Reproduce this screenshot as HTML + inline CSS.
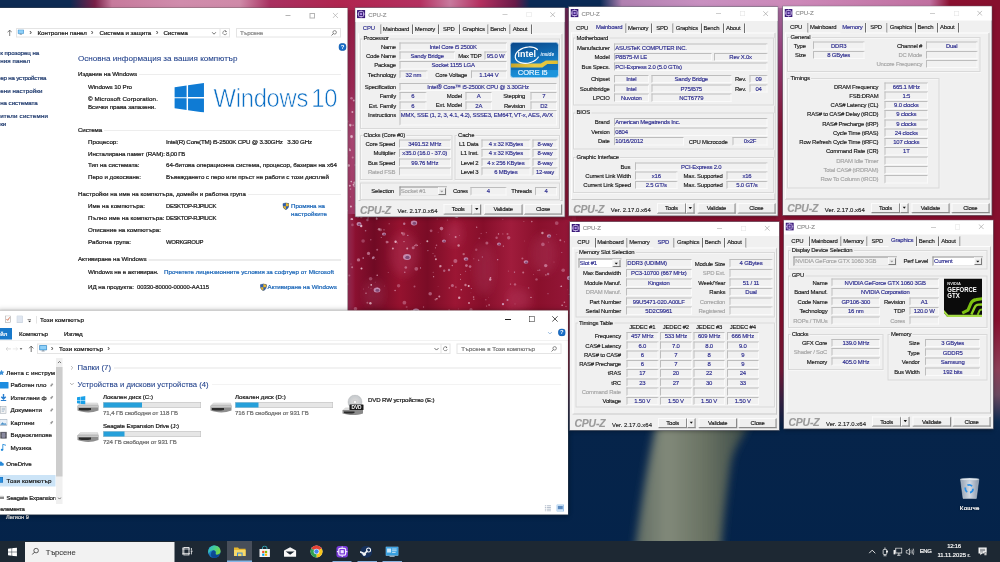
<!DOCTYPE html>
<html lang="bg"><head><meta charset="utf-8"><title>Desktop</title><style>
html,body{margin:0;padding:0;}
body{overflow:hidden;background:#04234a;font-family:"Liberation Sans",sans-serif;}
#r{position:relative;width:2000px;height:1124px;overflow:hidden;}
.b{position:absolute;display:block;}
.t{position:absolute;white-space:nowrap;line-height:1;-webkit-text-stroke:0.44px;}
.vb{border:2px solid #bdbdbd;border-right-color:#fafafa;border-bottom-color:#fafafa;box-sizing:border-box;background:#f1f1f1;}
.gb{border:2px solid #d9d9d9;box-sizing:border-box;box-shadow:1.2px 1.2px 0 #fcfcfc,inset 1.2px 1.2px 0 #fcfcfc;}
.bt{border:2px solid #fbfbfb;border-right-color:#8a8a8a;border-bottom-color:#8a8a8a;box-sizing:border-box;background:#efefef;box-shadow:1px 1px 0 #bdbdbd;}

html,body{width:1000px;height:562px;}
#o{position:absolute;left:0;top:0;width:2000px;height:1124px;transform:scale(0.5);transform-origin:0 0;overflow:hidden;}
</style></head><body><div id="o"><div id="r"><svg width="0" height="0" style="position:absolute"><defs><filter id="bl05" x="-5%" y="-5%" width="110%" height="110%"><feGaussianBlur stdDeviation="0.5"/></filter><filter id="bl3" x="-20%" y="-20%" width="140%" height="140%"><feGaussianBlur stdDeviation="4"/></filter></defs></svg>
<div class="b" style="left:0;top:0;width:2000px;height:1124px;background:linear-gradient(180deg,#8f0f2e 0px,#8a1030 640px,#7a1a3a 740px,#3a2448 800px,#06244a 856px,#04234a 1124px);"></div>
<div class="b" style="left:688px;top:16px;width:32px;height:424px;background:linear-gradient(180deg,#9a1c46 0,#a02a58 160px,#b04a78 260px,#a83a68 424px);"></div>
<div class="b" style="left:688px;top:428px;width:464px;height:200px;background:linear-gradient(90deg,#b04070 0,#8a1030 5%,#700a24 13%,#95122f 24%,#7a0c26 36%,#9c1634 48%,#860e2a 60%,#a01c3c 72%,#8a102c 84%,#96183a 100%);"></div>
<svg class="b" style="left:688px;top:428px;" width="464.00" height="200.00" viewBox="0 0 232 100"><g filter="url(#bl05)"><ellipse cx="60" cy="40" rx="14" ry="22" fill="#c04870" opacity="0.28" filter="url(#bl3)"/><ellipse cx="140" cy="55" rx="10" ry="26" fill="#c04870" opacity="0.28" filter="url(#bl3)"/><ellipse cx="200" cy="40" rx="12" ry="20" fill="#c04870" opacity="0.28" filter="url(#bl3)"/><ellipse cx="30" cy="80" rx="10" ry="14" fill="#c04870" opacity="0.28" filter="url(#bl3)"/><ellipse cx="110" cy="20" rx="9" ry="12" fill="#c04870" opacity="0.28" filter="url(#bl3)"/><ellipse cx="175" cy="85" rx="12" ry="10" fill="#c04870" opacity="0.28" filter="url(#bl3)"/><circle cx="105.0" cy="56.0" r="1.2" fill="#d8b0d0" opacity="0.55"/><circle cx="198.4" cy="19.0" r="1.2" fill="#f8e4ec" opacity="0.56"/><circle cx="142.4" cy="18.6" r="0.7" fill="#e0a0bc" opacity="0.38"/><circle cx="125.0" cy="89.0" r="1" fill="#f4d0e0" opacity="0.63"/><circle cx="91.9" cy="45.3" r="1" fill="#f8e4ec" opacity="0.66"/><circle cx="144.6" cy="83.2" r="0.4" fill="#f4d0e0" opacity="0.32"/><circle cx="204.1" cy="60.0" r="1.2" fill="#d8b0d0" opacity="0.48"/><circle cx="137.1" cy="19.5" r="0.5" fill="#e0a0bc" opacity="0.57"/><circle cx="153.7" cy="45.7" r="0.6" fill="#d8b0d0" opacity="0.85"/><circle cx="231.0" cy="84.0" r="1" fill="#e0a0bc" opacity="0.47"/><circle cx="53.3" cy="28.9" r="0.4" fill="#f8e4ec" opacity="0.72"/><circle cx="92.9" cy="84.7" r="0.7" fill="#f4d0e0" opacity="0.83"/><circle cx="196.6" cy="0.1" r="0.5" fill="#f4d0e0" opacity="0.56"/><circle cx="227.4" cy="39.7" r="0.4" fill="#f8e4ec" opacity="0.65"/><circle cx="180.6" cy="27.0" r="0.4" fill="#e0a0bc" opacity="0.48"/><circle cx="223.7" cy="75.8" r="0.4" fill="#eab8cc" opacity="0.44"/><circle cx="23.4" cy="6.0" r="1.2" fill="#d8b0d0" opacity="0.40"/><circle cx="129.8" cy="44.7" r="0.5" fill="#eab8cc" opacity="0.53"/><circle cx="89.0" cy="39.5" r="0.5" fill="#f4d0e0" opacity="0.45"/><circle cx="225.3" cy="80.3" r="0.6" fill="#f4d0e0" opacity="0.42"/><circle cx="91.5" cy="85.4" r="1" fill="#f8e4ec" opacity="0.36"/><circle cx="229.5" cy="21.3" r="0.6" fill="#f4d0e0" opacity="0.72"/><circle cx="76.3" cy="29.6" r="0.4" fill="#f4d0e0" opacity="0.35"/><circle cx="135.2" cy="24.3" r="0.8" fill="#e0a0bc" opacity="0.50"/><circle cx="105.1" cy="95.9" r="0.7" fill="#f8e4ec" opacity="0.37"/><circle cx="89.6" cy="62.7" r="0.6" fill="#eab8cc" opacity="0.75"/><circle cx="57.9" cy="19.0" r="1" fill="#f8e4ec" opacity="0.41"/><circle cx="220.4" cy="88.2" r="0.8" fill="#f4d0e0" opacity="0.53"/><circle cx="24.1" cy="3.9" r="0.6" fill="#eab8cc" opacity="0.71"/><circle cx="90.9" cy="42.1" r="0.8" fill="#d8b0d0" opacity="0.46"/><circle cx="40.7" cy="72.0" r="0.4" fill="#eab8cc" opacity="0.43"/><circle cx="129.8" cy="85.2" r="0.8" fill="#f4d0e0" opacity="0.45"/><circle cx="212.8" cy="20.4" r="0.4" fill="#f4d0e0" opacity="0.45"/><circle cx="103.4" cy="6.0" r="0.5" fill="#e0a0bc" opacity="0.50"/><circle cx="132.7" cy="13.2" r="0.6" fill="#eab8cc" opacity="0.79"/><circle cx="227.5" cy="65.7" r="1" fill="#f8e4ec" opacity="0.62"/><circle cx="32.6" cy="3.5" r="0.4" fill="#d8b0d0" opacity="0.80"/><circle cx="162.6" cy="96.3" r="0.4" fill="#f8e4ec" opacity="0.65"/><circle cx="111.9" cy="73.0" r="0.6" fill="#eab8cc" opacity="0.85"/><circle cx="17.5" cy="54.6" r="1" fill="#f4d0e0" opacity="0.80"/><circle cx="171.0" cy="70.4" r="1.2" fill="#e0a0bc" opacity="0.49"/><circle cx="159.0" cy="90.1" r="1.2" fill="#d8b0d0" opacity="0.82"/><circle cx="7.0" cy="50.0" r="0.4" fill="#f8e4ec" opacity="0.66"/><circle cx="88.0" cy="1.2" r="0.4" fill="#f4d0e0" opacity="0.35"/><circle cx="26.8" cy="25.7" r="0.7" fill="#e0a0bc" opacity="0.51"/><circle cx="170.5" cy="58.1" r="0.7" fill="#d8b0d0" opacity="0.76"/><circle cx="19.4" cy="75.0" r="0.4" fill="#e0a0bc" opacity="0.63"/><circle cx="111.6" cy="23.0" r="1" fill="#f4d0e0" opacity="0.57"/><circle cx="142.6" cy="92.0" r="0.6" fill="#f4d0e0" opacity="0.50"/><circle cx="33.2" cy="61.2" r="0.8" fill="#eab8cc" opacity="0.71"/><circle cx="79.5" cy="93.0" r="0.7" fill="#eab8cc" opacity="0.48"/><circle cx="154.5" cy="19.9" r="0.7" fill="#eab8cc" opacity="0.78"/><circle cx="89.2" cy="58.3" r="0.6" fill="#eab8cc" opacity="0.37"/><circle cx="115.2" cy="83.7" r="1.2" fill="#f4d0e0" opacity="0.69"/><circle cx="220.4" cy="27.7" r="0.5" fill="#f4d0e0" opacity="0.55"/><circle cx="63.8" cy="21.4" r="0.7" fill="#d8b0d0" opacity="0.64"/><circle cx="114.6" cy="31.5" r="1.2" fill="#f8e4ec" opacity="0.55"/><circle cx="17.3" cy="3.1" r="1.2" fill="#f8e4ec" opacity="0.32"/><circle cx="164.4" cy="57.1" r="0.6" fill="#f8e4ec" opacity="0.31"/><circle cx="31.5" cy="45.5" r="0.4" fill="#e0a0bc" opacity="0.43"/><circle cx="32.7" cy="4.7" r="1" fill="#f4d0e0" opacity="0.55"/><circle cx="146.2" cy="65.5" r="1.2" fill="#e0a0bc" opacity="0.83"/><circle cx="158.8" cy="19.9" r="0.7" fill="#e0a0bc" opacity="0.40"/><circle cx="2.5" cy="47.2" r="1" fill="#f4d0e0" opacity="0.40"/><circle cx="63.2" cy="34.6" r="1" fill="#f8e4ec" opacity="0.58"/><circle cx="231.3" cy="15.9" r="1.2" fill="#eab8cc" opacity="0.35"/><circle cx="216.4" cy="72.2" r="0.5" fill="#d8b0d0" opacity="0.55"/><circle cx="145.1" cy="91.0" r="0.7" fill="#f8e4ec" opacity="0.61"/><circle cx="204.0" cy="79.7" r="0.6" fill="#d8b0d0" opacity="0.48"/><circle cx="227.9" cy="9.9" r="1.2" fill="#f4d0e0" opacity="0.42"/><circle cx="208.8" cy="98.0" r="0.6" fill="#f8e4ec" opacity="0.84"/><circle cx="216.3" cy="26.2" r="1" fill="#f4d0e0" opacity="0.49"/><circle cx="19.2" cy="44.1" r="0.8" fill="#d8b0d0" opacity="0.72"/><circle cx="113.1" cy="2.8" r="1.2" fill="#f4d0e0" opacity="0.54"/><circle cx="8.1" cy="53.3" r="1" fill="#eab8cc" opacity="0.56"/><circle cx="232.0" cy="90.1" r="0.8" fill="#d8b0d0" opacity="0.82"/><circle cx="114.3" cy="94.9" r="0.4" fill="#eab8cc" opacity="0.54"/><circle cx="129.6" cy="83.1" r="0.8" fill="#eab8cc" opacity="0.59"/><circle cx="195.7" cy="56.0" r="0.6" fill="#d8b0d0" opacity="0.83"/><circle cx="201.9" cy="60.9" r="0.6" fill="#eab8cc" opacity="0.83"/><circle cx="121.6" cy="57.3" r="0.5" fill="#d8b0d0" opacity="0.59"/><circle cx="116.7" cy="60.5" r="0.4" fill="#f8e4ec" opacity="0.83"/><circle cx="119.7" cy="40.1" r="1.2" fill="#f8e4ec" opacity="0.37"/><circle cx="21.6" cy="16.7" r="0.8" fill="#d8b0d0" opacity="0.53"/><circle cx="222.0" cy="92.3" r="0.6" fill="#eab8cc" opacity="0.56"/><circle cx="29.5" cy="43.4" r="1.2" fill="#d8b0d0" opacity="0.59"/><circle cx="25.2" cy="42.0" r="0.4" fill="#e0a0bc" opacity="0.37"/><circle cx="180.8" cy="2.3" r="0.5" fill="#eab8cc" opacity="0.42"/><circle cx="159.4" cy="32.2" r="0.6" fill="#eab8cc" opacity="0.64"/><circle cx="24.3" cy="73.1" r="0.4" fill="#f8e4ec" opacity="0.64"/><circle cx="166.5" cy="70.1" r="0.7" fill="#f4d0e0" opacity="0.51"/><circle cx="95.9" cy="52.9" r="0.5" fill="#f8e4ec" opacity="0.41"/><circle cx="146.5" cy="63.8" r="0.8" fill="#eab8cc" opacity="0.77"/><circle cx="141.9" cy="85.7" r="0.5" fill="#e0a0bc" opacity="0.80"/><circle cx="73.3" cy="31.5" r="0.5" fill="#eab8cc" opacity="0.73"/><circle cx="45.1" cy="9.7" r="0.5" fill="#eab8cc" opacity="0.70"/><circle cx="60.2" cy="9.7" r="1.2" fill="#d8b0d0" opacity="0.60"/><circle cx="163.5" cy="20.1" r="1" fill="#f4d0e0" opacity="0.35"/><circle cx="132.2" cy="35.8" r="1.2" fill="#e0a0bc" opacity="0.36"/><circle cx="117.3" cy="75.8" r="0.8" fill="#eab8cc" opacity="0.74"/><circle cx="111.8" cy="2.4" r="1.2" fill="#f8e4ec" opacity="0.64"/><circle cx="210.0" cy="48.1" r="0.5" fill="#eab8cc" opacity="0.36"/><circle cx="40.0" cy="15.8" r="0.6" fill="#f4d0e0" opacity="0.62"/><circle cx="31.2" cy="68.1" r="0.4" fill="#f4d0e0" opacity="0.48"/><circle cx="108.3" cy="51.5" r="0.7" fill="#eab8cc" opacity="0.63"/><circle cx="3.1" cy="70.1" r="1.2" fill="#eab8cc" opacity="0.40"/><circle cx="105.3" cy="73.9" r="0.7" fill="#eab8cc" opacity="0.63"/><circle cx="22.0" cy="79.2" r="0.6" fill="#f4d0e0" opacity="0.74"/><circle cx="163.5" cy="86.1" r="1" fill="#d8b0d0" opacity="0.61"/><circle cx="44.3" cy="58.5" r="0.6" fill="#e0a0bc" opacity="0.45"/><circle cx="27.0" cy="74.3" r="0.5" fill="#d8b0d0" opacity="0.37"/><circle cx="76.5" cy="53.9" r="0.6" fill="#d8b0d0" opacity="0.72"/><circle cx="94.1" cy="72.3" r="0.4" fill="#e0a0bc" opacity="0.47"/><circle cx="23.4" cy="88.8" r="1" fill="#f8e4ec" opacity="0.33"/><circle cx="63.3" cy="96.1" r="0.6" fill="#e0a0bc" opacity="0.42"/><circle cx="94.2" cy="18.2" r="0.4" fill="#d8b0d0" opacity="0.58"/><circle cx="115.4" cy="21.3" r="0.4" fill="#d8b0d0" opacity="0.84"/><circle cx="5.3" cy="61.5" r="1" fill="#eab8cc" opacity="0.44"/><circle cx="93.2" cy="5.0" r="0.5" fill="#d8b0d0" opacity="0.31"/><circle cx="60.0" cy="27.6" r="0.6" fill="#f8e4ec" opacity="0.60"/><circle cx="96.4" cy="52.1" r="1.2" fill="#f4d0e0" opacity="0.65"/><circle cx="187.8" cy="7.6" r="0.8" fill="#f4d0e0" opacity="0.51"/><circle cx="217.8" cy="38.6" r="0.5" fill="#d8b0d0" opacity="0.60"/><circle cx="138.4" cy="43.0" r="0.7" fill="#d8b0d0" opacity="0.46"/><circle cx="92.5" cy="31.2" r="0.8" fill="#e0a0bc" opacity="0.57"/><circle cx="62.6" cy="92.9" r="1" fill="#e0a0bc" opacity="0.31"/><circle cx="179.2" cy="58.6" r="1" fill="#eab8cc" opacity="0.52"/><circle cx="158.8" cy="5.3" r="0.6" fill="#d8b0d0" opacity="0.33"/><circle cx="229.4" cy="94.4" r="0.4" fill="#eab8cc" opacity="0.54"/><circle cx="110.8" cy="97.3" r="0.5" fill="#f4d0e0" opacity="0.59"/><circle cx="217.4" cy="72.3" r="0.7" fill="#eab8cc" opacity="0.84"/><circle cx="189.5" cy="60.4" r="0.4" fill="#f4d0e0" opacity="0.64"/><circle cx="105.7" cy="20.4" r="0.4" fill="#e0a0bc" opacity="0.59"/><circle cx="28.8" cy="44.3" r="1" fill="#d8b0d0" opacity="0.55"/><circle cx="60.8" cy="58.2" r="0.7" fill="#e0a0bc" opacity="0.73"/><circle cx="123.1" cy="99.8" r="0.6" fill="#eab8cc" opacity="0.43"/><circle cx="26.4" cy="89.3" r="1.2" fill="#f8e4ec" opacity="0.64"/><circle cx="83.3" cy="27.2" r="1" fill="#f8e4ec" opacity="0.68"/><circle cx="44.1" cy="27.9" r="0.5" fill="#eab8cc" opacity="0.82"/><circle cx="116.5" cy="65.3" r="0.5" fill="#f4d0e0" opacity="0.65"/><circle cx="2.2" cy="26.0" r="0.4" fill="#f8e4ec" opacity="0.32"/><circle cx="51.6" cy="27.8" r="1.2" fill="#f4d0e0" opacity="0.80"/><circle cx="37.3" cy="23.5" r="0.6" fill="#d8b0d0" opacity="0.56"/><circle cx="48.9" cy="34.4" r="1" fill="#eab8cc" opacity="0.76"/><circle cx="17.2" cy="12.0" r="1.2" fill="#f8e4ec" opacity="0.76"/><circle cx="178.4" cy="44.4" r="1" fill="#e0a0bc" opacity="0.51"/><circle cx="35.0" cy="15.3" r="1.2" fill="#f8e4ec" opacity="0.48"/><circle cx="127.3" cy="74.6" r="0.5" fill="#d8b0d0" opacity="0.66"/><circle cx="134.7" cy="46.2" r="0.6" fill="#f4d0e0" opacity="0.60"/><circle cx="100.2" cy="56.8" r="1.2" fill="#d8b0d0" opacity="0.46"/><circle cx="179.9" cy="7.6" r="0.5" fill="#f8e4ec" opacity="0.34"/><circle cx="70.5" cy="72.5" r="1" fill="#e0a0bc" opacity="0.46"/><circle cx="33.2" cy="35.8" r="1" fill="#e0a0bc" opacity="0.50"/><circle cx="27.2" cy="70.9" r="0.8" fill="#f8e4ec" opacity="0.81"/><circle cx="218.1" cy="91.3" r="0.7" fill="#f8e4ec" opacity="0.74"/><circle cx="70.7" cy="31.8" r="0.7" fill="#f8e4ec" opacity="0.44"/><circle cx="83.9" cy="36.6" r="0.6" fill="#d8b0d0" opacity="0.62"/><circle cx="184.7" cy="73.9" r="0.6" fill="#d8b0d0" opacity="0.60"/><circle cx="194.0" cy="56.3" r="0.5" fill="#f4d0e0" opacity="0.72"/><circle cx="204.4" cy="28.1" r="0.4" fill="#eab8cc" opacity="0.58"/><circle cx="126.2" cy="56.7" r="0.4" fill="#d8b0d0" opacity="0.34"/><circle cx="126.9" cy="78.8" r="0.4" fill="#e0a0bc" opacity="0.34"/><circle cx="171.0" cy="89.9" r="0.4" fill="#f4d0e0" opacity="0.65"/><circle cx="33.4" cy="74.6" r="1" fill="#d8b0d0" opacity="0.43"/><circle cx="51.1" cy="76.5" r="0.8" fill="#e0a0bc" opacity="0.72"/><circle cx="91.5" cy="33.8" r="0.6" fill="#eab8cc" opacity="0.57"/><circle cx="124.7" cy="72.1" r="1" fill="#f8e4ec" opacity="0.80"/><circle cx="95.3" cy="82.6" r="1" fill="#e0a0bc" opacity="0.77"/><circle cx="187.0" cy="83.4" r="0.7" fill="#f8e4ec" opacity="0.65"/><circle cx="121.5" cy="71.0" r="1.2" fill="#f4d0e0" opacity="0.53"/><circle cx="97.5" cy="14.6" r="1.8" fill="#e0a8c4" opacity="0.60"/><circle cx="87.1" cy="16.8" r="1.4" fill="#e0a8c4" opacity="0.43"/><circle cx="67.7" cy="97.0" r="1.2" fill="#e0a8c4" opacity="0.39"/><circle cx="26.6" cy="64.8" r="1.8" fill="#e0a8c4" opacity="0.35"/><circle cx="14.5" cy="45.9" r="1.7" fill="#e0a8c4" opacity="0.57"/><circle cx="8.4" cy="10.9" r="1.3" fill="#e0a8c4" opacity="0.37"/><circle cx="54.6" cy="71.7" r="1.7" fill="#e0a8c4" opacity="0.37"/><circle cx="42.9" cy="28.1" r="1.3" fill="#e0a8c4" opacity="0.53"/><circle cx="72.3" cy="54.8" r="1.9" fill="#e0a8c4" opacity="0.44"/><circle cx="60.4" cy="88.7" r="1.9" fill="#e0a8c4" opacity="0.40"/><circle cx="127.0" cy="95.7" r="1.6" fill="#e0a8c4" opacity="0.37"/><circle cx="11.5" cy="94.8" r="1.8" fill="#e0a8c4" opacity="0.42"/><circle cx="122.4" cy="51.6" r="1.4" fill="#e0a8c4" opacity="0.60"/><circle cx="152.6" cy="23.8" r="1.2" fill="#e0a8c4" opacity="0.44"/><circle cx="86.2" cy="79.7" r="1.8" fill="#e0a8c4" opacity="0.48"/><circle cx="36.5" cy="15.7" r="1.5" fill="#e0a8c4" opacity="0.38"/><circle cx="201.7" cy="51.6" r="1.7" fill="#e0a8c4" opacity="0.60"/><circle cx="61.8" cy="53.5" r="1.3" fill="#e0a8c4" opacity="0.53"/><circle cx="0.3" cy="82.1" r="1.9" fill="#e0a8c4" opacity="0.55"/><circle cx="19.1" cy="27.0" r="1.8" fill="#e0a8c4" opacity="0.33"/><circle cx="111.4" cy="46.9" r="2.0" fill="#e0a8c4" opacity="0.48"/><circle cx="198.9" cy="30.4" r="1.8" fill="#e0a8c4" opacity="0.43"/><circle cx="212.7" cy="9.1" r="1.9" fill="#e0a8c4" opacity="0.36"/><circle cx="126.1" cy="52.6" r="1.3" fill="#e0a8c4" opacity="0.55"/><circle cx="72.2" cy="31.1" r="1.3" fill="#e0a8c4" opacity="0.39"/><circle cx="108.4" cy="71.5" r="1.5" fill="#e0a8c4" opacity="0.51"/><circle cx="24.5" cy="39.4" r="1.6" fill="#e0a8c4" opacity="0.59"/><circle cx="192.5" cy="65.4" r="1.2" fill="#e0a8c4" opacity="0.41"/><circle cx="164.7" cy="23.7" r="1.7" fill="#e0a8c4" opacity="0.44"/><circle cx="2.4" cy="99.2" r="1.8" fill="#e0a8c4" opacity="0.36"/><circle cx="142.9" cy="29.0" r="1.5" fill="#e0a8c4" opacity="0.46"/><circle cx="69.2" cy="33.7" r="1.5" fill="#e0a8c4" opacity="0.50"/><circle cx="59.5" cy="20.0" r="1.8" fill="#e0a8c4" opacity="0.40"/><circle cx="219.2" cy="56.3" r="1.8" fill="#e0a8c4" opacity="0.40"/><ellipse cx="70" cy="9" rx="3.2" ry="2.4" fill="#d0a4c8" opacity="0.8"/><ellipse cx="70.4" cy="9.4" rx="1.8" ry="1.3" fill="#5a2858" opacity="0.65"/><ellipse cx="33" cy="76" rx="3.4" ry="2.5" fill="#d0a4c8" opacity="0.8"/><ellipse cx="33.4" cy="76.4" rx="1.9" ry="1.4" fill="#5a2858" opacity="0.65"/><ellipse cx="63" cy="43" rx="4" ry="3.0" fill="#d0a4c8" opacity="0.8"/><ellipse cx="63.4" cy="43.4" rx="2.2" ry="1.6" fill="#5a2858" opacity="0.65"/><ellipse cx="122" cy="45" rx="2.4" ry="1.8" fill="#d0a4c8" opacity="0.8"/><ellipse cx="122.4" cy="45.4" rx="1.3" ry="1.0" fill="#5a2858" opacity="0.65"/><ellipse cx="182" cy="48" rx="2.4" ry="1.8" fill="#d0a4c8" opacity="0.8"/><ellipse cx="182.4" cy="48.4" rx="1.3" ry="1.0" fill="#5a2858" opacity="0.65"/><ellipse cx="226" cy="64" rx="3" ry="2.2" fill="#d0a4c8" opacity="0.8"/><ellipse cx="226.4" cy="64.4" rx="1.7" ry="1.2" fill="#5a2858" opacity="0.65"/><ellipse cx="72" cy="97" rx="3.4" ry="2.5" fill="#d0a4c8" opacity="0.8"/><ellipse cx="72.4" cy="97.4" rx="1.9" ry="1.4" fill="#5a2858" opacity="0.65"/><ellipse cx="100" cy="27" rx="2" ry="1.5" fill="#d0a4c8" opacity="0.8"/><ellipse cx="100.4" cy="27.4" rx="1.1" ry="0.8" fill="#5a2858" opacity="0.65"/><ellipse cx="155" cy="30" rx="2" ry="1.5" fill="#d0a4c8" opacity="0.8"/><ellipse cx="155.4" cy="30.4" rx="1.1" ry="0.8" fill="#5a2858" opacity="0.65"/><ellipse cx="40" cy="20" rx="2" ry="1.5" fill="#d0a4c8" opacity="0.8"/><ellipse cx="40.4" cy="20.4" rx="1.1" ry="0.8" fill="#5a2858" opacity="0.65"/><ellipse cx="205" cy="22" rx="2.2" ry="1.7" fill="#d0a4c8" opacity="0.8"/><ellipse cx="205.4" cy="22.4" rx="1.2" ry="0.9" fill="#5a2858" opacity="0.65"/><ellipse cx="15" cy="10" rx="2.5" ry="1.9" fill="#d0a4c8" opacity="0.8"/><ellipse cx="15.4" cy="10.4" rx="1.4" ry="1.0" fill="#5a2858" opacity="0.65"/></g></svg>
<svg class="b" style="left:688px;top:16px;" width="32.00" height="424.00" viewBox="0 0 16 212"><circle cx="13.2" cy="83.1" r="0.8" fill="#f4d0e0" opacity="0.71"/><circle cx="2.1" cy="159.5" r="0.8" fill="#f4d0e0" opacity="0.49"/><circle cx="6.4" cy="188.8" r="0.6" fill="#f4d0e0" opacity="0.45"/><circle cx="0.5" cy="210.2" r="1.3" fill="#f4d0e0" opacity="0.60"/><circle cx="1.2" cy="200.7" r="1.3" fill="#f4d0e0" opacity="0.86"/><circle cx="2.2" cy="99.2" r="0.8" fill="#f4d0e0" opacity="0.81"/><circle cx="6.2" cy="117.1" r="1.3" fill="#f4d0e0" opacity="0.71"/><circle cx="11.6" cy="157.1" r="1" fill="#f4d0e0" opacity="0.89"/><circle cx="12.6" cy="163.8" r="0.6" fill="#f4d0e0" opacity="0.53"/><circle cx="3.0" cy="113.6" r="1.3" fill="#f4d0e0" opacity="0.45"/><circle cx="6.0" cy="142.3" r="1" fill="#f4d0e0" opacity="0.81"/><circle cx="9.8" cy="92.5" r="1" fill="#f4d0e0" opacity="0.67"/><circle cx="5.6" cy="141.1" r="0.8" fill="#f4d0e0" opacity="0.69"/><circle cx="3.2" cy="202.6" r="0.8" fill="#f4d0e0" opacity="0.68"/><circle cx="0.4" cy="163.6" r="0.6" fill="#f4d0e0" opacity="0.47"/><circle cx="7.6" cy="129.3" r="1" fill="#f4d0e0" opacity="0.56"/><circle cx="14.9" cy="121.3" r="1.3" fill="#f4d0e0" opacity="0.84"/><circle cx="7.2" cy="173.6" r="0.8" fill="#f4d0e0" opacity="0.85"/><circle cx="8.7" cy="149.6" r="1" fill="#f4d0e0" opacity="0.48"/><circle cx="11.9" cy="197.4" r="1" fill="#f4d0e0" opacity="0.70"/><circle cx="2.0" cy="187.1" r="1" fill="#f4d0e0" opacity="0.74"/><circle cx="5.8" cy="177.7" r="1" fill="#f4d0e0" opacity="0.82"/><circle cx="3.0" cy="147.8" r="0.6" fill="#f4d0e0" opacity="0.63"/><circle cx="6.5" cy="181.1" r="0.8" fill="#f4d0e0" opacity="0.55"/><circle cx="10.7" cy="174.8" r="1.3" fill="#f4d0e0" opacity="0.71"/><circle cx="10.2" cy="178.4" r="0.8" fill="#f4d0e0" opacity="0.50"/><circle cx="7.5" cy="90.3" r="1.3" fill="#f4d0e0" opacity="0.46"/><circle cx="6.5" cy="117.7" r="0.8" fill="#f4d0e0" opacity="0.53"/><circle cx="9.1" cy="117.2" r="0.6" fill="#f4d0e0" opacity="0.76"/><circle cx="12.6" cy="127.3" r="1.3" fill="#f4d0e0" opacity="0.70"/><circle cx="7.5" cy="128.4" r="1.3" fill="#f4d0e0" opacity="0.78"/><circle cx="7.8" cy="211.2" r="1.3" fill="#f4d0e0" opacity="0.81"/><circle cx="1.9" cy="86.3" r="1" fill="#f4d0e0" opacity="0.66"/><circle cx="6.9" cy="198.4" r="1" fill="#f4d0e0" opacity="0.85"/><circle cx="4.7" cy="157.5" r="1.3" fill="#f4d0e0" opacity="0.77"/><circle cx="9.6" cy="176.8" r="1" fill="#f4d0e0" opacity="0.84"/><circle cx="14.0" cy="104.7" r="1.3" fill="#f4d0e0" opacity="0.52"/><circle cx="14.0" cy="208.1" r="1.3" fill="#f4d0e0" opacity="0.75"/><circle cx="8.4" cy="104.0" r="1" fill="#f4d0e0" opacity="0.73"/><circle cx="15.0" cy="194.9" r="1" fill="#f4d0e0" opacity="0.83"/></svg>
<div class="b" style="left:0px;top:0px;width:2000px;height:20px;background:linear-gradient(90deg,#0d2a52 0,#0d2a52 140px,#7a2048 190px,#c77a9c 224px,#d08cac 360px,#cf8aa8 480px,#a83060 540px,#b0254f 680px,#b43060 840px,#c87a9e 900px,#b43060 960px,#6a1a48 1030px,#0a2a55 1060px,#0a2a55 1200px,#b080b0 1244px,#c890c0 1400px,#cc88b8 1600px,#c070a0 1860px,#8a1030 1900px,#86102e 2000px);"></div>
<div class="b" style="left:1124px;top:16px;width:20px;height:424px;background:linear-gradient(180deg,#6a2858 0,#8a2050 80px,#8c1838 240px,#8a1434 424px);"></div>
<div class="b" style="left:1552px;top:16px;width:18px;height:424px;background:linear-gradient(180deg,#b070a8 0,#a04080 100px,#8c1838 240px,#8a1434 424px);"></div>
<div class="b" style="left:1976px;top:0px;width:24px;height:1124px;background:linear-gradient(180deg,#86102e 0,#86102e 640px,#8c4058 740px,#6a4a60 790px,#0a2a50 844px,rgba(6,36,74,0) 864px);"></div>
<svg class="b" style="left:1120px;top:840px;" width="520.00" height="260.00" viewBox="0 0 260 130"><defs><linearGradient id="stg" x1="0" x2="1" y1="0" y2="0"><stop offset="0" stop-color="#5e6a62"/><stop offset="0.28" stop-color="#828a7a"/><stop offset="0.62" stop-color="#687162"/><stop offset="1" stop-color="#384846"/></linearGradient></defs><path d="M97 0 L190 0 C186 14 174 26 171 42 C167 70 163 100 161 130 L75 130 C80 90 88 40 97 0 Z" fill="url(#stg)" filter="url(#bl3)"/></svg>
<div class="t" style="left:12px;top:1028.46px;font-size:11.2px;color:#e8e8e8;">Легион 9</div>
<svg class="b" style="left:1919.2px;top:955.2px;" width="40.80" height="44.00" viewBox="0 0 40 43"><defs><linearGradient id="rg" x1="0" y1="0" x2="1" y2="0"><stop offset="0" stop-color="#9aa8b8"/><stop offset="0.5" stop-color="#dfe5ec"/><stop offset="1" stop-color="#8e9cae"/></linearGradient></defs><path d="M2 3 H38 L33 41 H7 Z" fill="url(#rg)" stroke="#d8e0e8" stroke-width="1" opacity="0.95"/><ellipse cx="20" cy="3.6" rx="18" ry="2.6" fill="#dfe6ee" stroke="#9aa8b8" stroke-width="0.8"/><circle cx="19" cy="22" r="7.6" fill="none" stroke="#2a90e8" stroke-width="3.4" stroke-dasharray="10 5.6"/></svg>
<div class="t" style="left:1939.6px;top:1008.82px;font-size:12.4px;color:#fff;letter-spacing:0.516px;transform:translateX(-50%);text-shadow:0 1px 3px #000;">Кошче</div>
<div class="b" style="left:-4px;top:16px;width:699px;height:608px;background:#fff;box-shadow:0 0 0 1.2px rgba(90,90,90,.55),0 6px 12px rgba(0,0,0,.35);"></div>
<div class="b" style="left:570.6px;top:30.4px;width:10.8px;height:2px;background:#b4b4b4;"></div>
<div class="b" style="left:618.6px;top:25.6px;width:11.2px;height:11.2px;border:2px solid #b4b4b4;box-sizing:border-box;"></div>
<svg class="b" style="left:665.2px;top:25.2px;" width="11.60" height="11.60" viewBox="0 0 10 10"><path d="M0.5 0.5 L9.5 9.5 M9.5 0.5 L0.5 9.5" stroke="#a0a0a0" stroke-width="1"/></svg>
<svg class="b" style="left:13.6px;top:58.8px;" width="10.80" height="13.60" viewBox="0 0 8 10"><path d="M4 9.6 V1 M0.8 4.2 L4 0.9 L7.2 4.2" fill="none" stroke="#555" stroke-width="1.1"/></svg>
<div class="b" style="left:32px;top:56px;width:428px;height:19.2px;border:2px solid #e4e4e4;box-sizing:border-box;background:#fff;"></div>
<svg class="b" style="left:35.2px;top:59.2px;" width="13.20" height="11.22" viewBox="0 0 16 13.6"><rect x="1" y="0.5" width="14" height="9.5" rx="0.6" fill="#3fa0e0" stroke="#2070b0" stroke-width="0.8"/><rect x="2.2" y="1.7" width="11.6" height="7" fill="#8fd0f8"/><rect x="5" y="11" width="6" height="1.6" fill="#8a99a8"/><rect x="7" y="10" width="2" height="1.4" fill="#6a7a8a"/></svg>
<div class="t" style="left:59.2px;top:58.38px;font-size:14px;color:#555;">›</div>
<div class="t" style="left:75px;top:59.22px;font-size:12.4px;color:#1a1a1a;letter-spacing:0.016px;">Контролен панел</div>
<div class="t" style="left:182px;top:58.38px;font-size:14px;color:#555;">›</div>
<div class="t" style="left:199px;top:59.22px;font-size:12.4px;color:#1a1a1a;letter-spacing:-0.15px;">Система и защита</div>
<div class="t" style="left:312px;top:58.38px;font-size:14px;color:#555;">›</div>
<div class="t" style="left:327px;top:59.22px;font-size:12.4px;color:#1a1a1a;letter-spacing:-0.206px;">Система</div>
<svg class="b" style="left:422.6px;top:62.8px;" width="10.00" height="6.80" viewBox="0 0 10 6"><path d="M1 1 L5 5 L9 1" fill="none" stroke="#444" stroke-width="1.5"/></svg>
<div class="b" style="left:438.8px;top:57px;width:2px;height:17.2px;background:#e4e4e4;"></div>
<svg class="b" style="left:443.6px;top:59.6px;" width="11.20" height="11.60" viewBox="0 0 12 12"><path d="M9.6 3.2 A4.3 4.3 0 1 0 10.3 6.6" fill="none" stroke="#555" stroke-width="1.3"/><path d="M7.3 0.6 L10.4 3 L7.3 4.4 Z" fill="#555"/></svg>
<div class="b" style="left:472px;top:56px;width:210px;height:19.2px;border:2px solid #e4e4e4;box-sizing:border-box;background:#fff;"></div>
<div class="t" style="left:480px;top:59.22px;font-size:12.4px;color:#8a8a8a;letter-spacing:-0.436px;">Търсене</div>
<svg class="b" style="left:662px;top:59.6px;" width="12.00" height="12.00" viewBox="0 0 12 12"><circle cx="7.3" cy="4.7" r="3.5" fill="none" stroke="#555" stroke-width="1.3"/><path d="M4.8 7.2 L1 11" stroke="#555" stroke-width="1.5"/></svg>
<div class="t" style="left:0.4px;top:99.42px;font-size:12.4px;color:#1f3a6e;letter-spacing:-0.136px;">к прозорец на</div>
<div class="t" style="left:0.4px;top:115.42px;font-size:12.4px;color:#1f3a6e;letter-spacing:0.21px;">ния панел</div>
<div class="t" style="left:0.4px;top:150.42px;font-size:12.4px;color:#1f3a6e;letter-spacing:-0.394px;">ер на устройства</div>
<div class="t" style="left:0.4px;top:175.42px;font-size:12.4px;color:#1f3a6e;letter-spacing:0.168px;">ени настройки</div>
<div class="t" style="left:0.4px;top:199.92px;font-size:12.4px;color:#1f3a6e;letter-spacing:-0.128px;">на системата</div>
<div class="t" style="left:0.4px;top:225.42px;font-size:12.4px;color:#1f3a6e;letter-spacing:0.384px;">ители системни</div>
<div class="t" style="left:0.4px;top:241.42px;font-size:12.4px;color:#1f3a6e;letter-spacing:-0.176px;">ки</div>
<svg class="b" style="left:676.8px;top:86px;" width="16.00" height="16.00" viewBox="0 0 16 16"><circle cx="8" cy="8" r="7.6" fill="#1a6fc8"/><circle cx="8" cy="8" r="7.6" fill="none" stroke="#0f4f98" stroke-width="0.8"/><text x="8" y="12.3" font-size="12" font-weight="bold" text-anchor="middle" fill="#fff" font-family="Liberation Sans, sans-serif">?</text></svg>
<div class="t" style="left:156px;top:107.42px;font-size:16.2px;color:#1f3f8a;letter-spacing:-0px;-webkit-text-stroke:0.16px;">Основна информация за вашия компютър</div>
<div class="t" style="left:156px;top:141.82px;font-size:12.4px;color:#1a1a1a;letter-spacing:-0.114px;">Издание на Windows</div>
<div class="b" style="left:278px;top:148.8px;width:404px;height:1.6px;background:#dadada;"></div>
<div class="t" style="left:176px;top:167.42px;font-size:12.4px;color:#1a1a1a;letter-spacing:-0.162px;">Windows 10 Pro</div>
<div class="t" style="left:176px;top:191.42px;font-size:12.4px;color:#1a1a1a;letter-spacing:0.228px;">© Microsoft Corporation.</div>
<div class="t" style="left:176px;top:207.42px;font-size:12.4px;color:#1a1a1a;letter-spacing:-0.03px;">Всички права запазени.</div>
<svg class="b" style="left:348px;top:166px;" width="61.60" height="59.20" viewBox="0 0 88 88"><path d="M0 12.4 L35.7 7.6 V42.1 H0 Z M40 6.9 L87.3 0 V41.8 H40 Z M0 45.7 H35.7 V80.3 L0 75.3 Z M40 46.2 H87.3 V88 L40 81.3 Z" fill="#0f7bd4"/></svg>
<div class="t" style="left:426.8px;top:168.6px;font-size:52px;color:#0a6ec4;transform-origin:0 0;transform:scaleX(0.9148);letter-spacing:-0.6px;word-spacing:-7px;-webkit-text-stroke:1.3px #fff;">Windows 10</div>
<div class="t" style="left:156px;top:252.62px;font-size:12.4px;color:#1a1a1a;letter-spacing:-0.276px;">Система</div>
<div class="b" style="left:208px;top:259.6px;width:474px;height:1.6px;background:#dadada;"></div>
<div class="t" style="left:176px;top:278.42px;font-size:12.4px;color:#1a1a1a;letter-spacing:-0.016px;">Процесор:</div>
<div class="t" style="left:332px;top:278.42px;font-size:12.4px;color:#1a1a1a;letter-spacing:-0.372px;white-space:pre;">Intel(R) Core(TM) i5-2500K CPU @ 3.30GHz   3.30 GHz</div>
<div class="t" style="left:176px;top:300.92px;font-size:12.4px;color:#1a1a1a;letter-spacing:-0.106px;">Инсталирана памет (RAM):</div>
<div class="t" style="left:332px;top:300.92px;font-size:12.4px;color:#1a1a1a;letter-spacing:-0.632px;white-space:pre;">8,00 ГБ</div>
<div class="t" style="left:176px;top:324.42px;font-size:12.4px;color:#1a1a1a;letter-spacing:-0.064px;">Тип на системата:</div>
<div class="t" style="left:332px;top:324.42px;font-size:12.4px;color:#1a1a1a;letter-spacing:-0.024px;white-space:pre;">64-битова операционна система, процесор, базиран на x64</div>
<div class="t" style="left:176px;top:346.92px;font-size:12.4px;color:#1a1a1a;letter-spacing:-0.044px;">Перо и докосване:</div>
<div class="t" style="left:332px;top:346.92px;font-size:12.4px;color:#1a1a1a;letter-spacing:-0.066px;white-space:pre;">Въвеждането с перо или пръст не работи с този дисплей</div>
<div class="t" style="left:156px;top:380.92px;font-size:12.4px;color:#1a1a1a;letter-spacing:0.04px;">Настройки на име на компютъра, домейн и работна група</div>
<div class="b" style="left:496px;top:387.9px;width:186px;height:1.6px;background:#dadada;"></div>
<div class="t" style="left:176px;top:406.42px;font-size:12.4px;color:#1a1a1a;letter-spacing:0.096px;">Име на компютъра:</div>
<div class="t" style="left:332px;top:406.74px;font-size:11.8px;color:#1a1a1a;letter-spacing:-0.706px;">DESKTOP-RJPIUCK</div>
<div class="t" style="left:176px;top:429.92px;font-size:12.4px;color:#1a1a1a;letter-spacing:0.068px;">Пълно име на компютъра:</div>
<div class="t" style="left:332px;top:430.24px;font-size:11.8px;color:#1a1a1a;letter-spacing:-0.706px;">DESKTOP-RJPIUCK</div>
<div class="t" style="left:176px;top:453.42px;font-size:12.4px;color:#1a1a1a;letter-spacing:0.042px;">Описание на компютъра:</div>
<div class="t" style="left:176px;top:478.42px;font-size:12.4px;color:#1a1a1a;letter-spacing:0.008px;">Работна група:</div>
<div class="t" style="left:332px;top:478.74px;font-size:11.8px;color:#1a1a1a;letter-spacing:-0.664px;">WORKGROUP</div>
<svg class="b" style="left:564.8px;top:405.2px;" width="13.60" height="14.96" viewBox="0 0 10 11"><path d="M5 0.3 L9.6 1.8 C9.6 6 8.4 9 5 10.8 C1.6 9 0.4 6 0.4 1.8 Z" fill="#2f5fb0"/><path d="M5 0.3 L9.6 1.8 C9.6 3.6 9.4 4.6 9.2 5.4 L5 5.4 Z" fill="#e8b830"/><path d="M5 5.4 L5 10.8 C1.6 9 0.8 7 0.6 5.4 Z" fill="#e8b830"/><path d="M5 0.3 L9.6 1.8 C9.6 6 8.4 9 5 10.8 C1.6 9 0.4 6 0.4 1.8 Z" fill="none" stroke="#2a4a7a" stroke-width="0.7"/></svg>
<div class="t" style="left:582px;top:406.42px;font-size:12.4px;color:#1a66b8;letter-spacing:-0.088px;">Промяна на</div>
<div class="t" style="left:582px;top:422.42px;font-size:12.4px;color:#1a66b8;letter-spacing:0.08px;">настройките</div>
<div class="t" style="left:156px;top:512.42px;font-size:12.4px;color:#1a1a1a;letter-spacing:-0.068px;">Активиране на Windows</div>
<div class="b" style="left:297px;top:519.4px;width:385px;height:1.6px;background:#dadada;"></div>
<div class="t" style="left:176px;top:538.42px;font-size:12.4px;color:#1a1a1a;letter-spacing:-0.128px;">Windows не е активиран.</div>
<div class="t" style="left:328px;top:538.42px;font-size:12.4px;color:#1a66b8;letter-spacing:0.024px;">Прочетете лицензионните условия за софтуер от Microsoft</div>
<div class="t" style="left:176px;top:567.42px;font-size:12.4px;color:#1a1a1a;letter-spacing:-0.07px;">ИД на продукта:</div>
<div class="t" style="left:274px;top:567.74px;font-size:11.8px;color:#1a1a1a;letter-spacing:-0.034px;">00330-80000-00000-AA115</div>
<svg class="b" style="left:520px;top:566.8px;" width="13.60" height="14.96" viewBox="0 0 10 11"><path d="M5 0.3 L9.6 1.8 C9.6 6 8.4 9 5 10.8 C1.6 9 0.4 6 0.4 1.8 Z" fill="#2f5fb0"/><path d="M5 0.3 L9.6 1.8 C9.6 3.6 9.4 4.6 9.2 5.4 L5 5.4 Z" fill="#e8b830"/><path d="M5 5.4 L5 10.8 C1.6 9 0.8 7 0.6 5.4 Z" fill="#e8b830"/><path d="M5 0.3 L9.6 1.8 C9.6 6 8.4 9 5 10.8 C1.6 9 0.4 6 0.4 1.8 Z" fill="none" stroke="#2a4a7a" stroke-width="0.7"/></svg>
<div class="t" style="left:535px;top:567.42px;font-size:12.4px;color:#1a66b8;letter-spacing:0.028px;">Активиране на Windows</div>
<div class="b" style="left:-4px;top:621px;width:1140px;height:408px;background:#fff;box-shadow:0 0 0 1.2px rgba(90,90,90,.45),0 -4px 10px rgba(0,0,0,.22),0 4px 10px rgba(0,0,0,.3);"></div>
<svg class="b" style="left:10.4px;top:631.2px;" width="12.00" height="15.20" viewBox="0 0 12 15"><rect x="0.6" y="0.6" width="10.8" height="13.8" fill="#fbfbfb" stroke="#9a9a9a" stroke-width="1"/><path d="M3 7 L5.4 9.6 L9.4 3.6" fill="none" stroke="#c8502a" stroke-width="1.5"/></svg>
<svg class="b" style="left:33.2px;top:631.2px;" width="12.40" height="15.20" viewBox="0 0 12 15"><rect x="0.6" y="0.6" width="10.8" height="13.8" fill="#dfe6f0" stroke="#b8c4d4" stroke-width="1"/></svg>
<div class="b" style="left:55.2px;top:638px;width:7.2px;height:1.4px;background:#333;"></div>
<svg class="b" style="left:55.6px;top:640.8px;" width="6.40" height="4.00" viewBox="0 0 8 5"><path d="M0 0 H8 L4 5 Z" fill="#333"/></svg>
<div class="b" style="left:71.6px;top:632px;width:1.4px;height:14.8px;background:#c8c8c8;"></div>
<div class="t" style="left:80px;top:632.62px;font-size:12.4px;color:#1a1a1a;letter-spacing:0.118px;">Този компютър</div>
<div class="b" style="left:1010.4px;top:638.4px;width:11.2px;height:1.6px;background:#222;"></div>
<div class="b" style="left:1057.8px;top:632.4px;width:11.4px;height:11.4px;border:1.6px solid #222;box-sizing:border-box;"></div>
<svg class="b" style="left:1104.2px;top:632.2px;" width="11.80" height="11.80" viewBox="0 0 10 10"><path d="M0.5 0.5 L9.5 9.5 M9.5 0.5 L0.5 9.5" stroke="#222" stroke-width="1.3"/></svg>
<div class="b" style="left:-2px;top:656px;width:26px;height:22.8px;background:#1979ca;"></div>
<div class="t" style="left:0.4px;top:661.42px;font-size:12.4px;color:#fff;">йл</div>
<div class="t" style="left:38px;top:661.42px;font-size:12.4px;color:#1a1a1a;letter-spacing:-0.088px;">Компютър</div>
<div class="t" style="left:128px;top:661.42px;font-size:12.4px;color:#1a1a1a;letter-spacing:-0.49px;">Изглед</div>
<svg class="b" style="left:1095.2px;top:662.8px;" width="9.60" height="6.00" viewBox="0 0 10 6"><path d="M1 1 L5 5 L9 1" fill="none" stroke="#7aa8d8" stroke-width="1.5"/></svg>
<svg class="b" style="left:1115.8px;top:657.4px;" width="15.60" height="15.60" viewBox="0 0 16 16"><circle cx="8" cy="8" r="7.6" fill="#1a6fc8"/><circle cx="8" cy="8" r="7.6" fill="none" stroke="#0f4f98" stroke-width="0.8"/><text x="8" y="12.3" font-size="12" font-weight="bold" text-anchor="middle" fill="#fff" font-family="Liberation Sans, sans-serif">?</text></svg>
<div class="b" style="left:0px;top:679.6px;width:1136px;height:1.6px;background:#e4e4e4;"></div>
<svg class="b" style="left:10.8px;top:692.8px;" width="11.20" height="9.60" viewBox="0 0 10 8"><path d="M9.6 4 H1 M4.2 0.8 L0.9 4 L4.2 7.2" fill="none" stroke="#c4c4c4" stroke-width="1.1"/></svg>
<svg class="b" style="left:25.2px;top:692.8px;" width="11.20" height="9.60" viewBox="0 0 10 8"><path d="M0.4 4 H9 M5.8 0.8 L9.1 4 L5.8 7.2" fill="none" stroke="#dcdcdc" stroke-width="1.1"/></svg>
<svg class="b" style="left:38.8px;top:696px;" width="6.00" height="4.00" viewBox="0 0 8 5"><path d="M0 0 H8 L4 5 Z" fill="#777"/></svg>
<svg class="b" style="left:56.8px;top:690.8px;" width="10.80" height="13.60" viewBox="0 0 8 10"><path d="M4 9.6 V1 M0.8 4.2 L4 0.9 L7.2 4.2" fill="none" stroke="#444" stroke-width="1.1"/></svg>
<div class="b" style="left:74px;top:687px;width:827px;height:21.2px;border:2px solid #e4e4e4;box-sizing:border-box;background:#fff;"></div>
<svg class="b" style="left:78.4px;top:690.4px;" width="16.40" height="13.94" viewBox="0 0 16 13.6"><rect x="1" y="0.5" width="14" height="9.5" rx="0.6" fill="#3fa0e0" stroke="#2070b0" stroke-width="0.8"/><rect x="2.2" y="1.7" width="11.6" height="7" fill="#8fd0f8"/><rect x="5" y="11" width="6" height="1.6" fill="#8a99a8"/><rect x="7" y="10" width="2" height="1.4" fill="#6a7a8a"/></svg>
<div class="t" style="left:102px;top:690.18px;font-size:14px;color:#555;">›</div>
<div class="t" style="left:118px;top:691.02px;font-size:12.4px;color:#1a1a1a;letter-spacing:0.118px;">Този компютър</div>
<div class="t" style="left:215.2px;top:690.18px;font-size:14px;color:#555;">›</div>
<svg class="b" style="left:867.6px;top:694.8px;" width="10.00" height="6.40" viewBox="0 0 10 6"><path d="M1 1 L5 5 L9 1" fill="none" stroke="#444" stroke-width="1.6"/></svg>
<div class="b" style="left:881.2px;top:688px;width:2px;height:19.2px;background:#e4e4e4;"></div>
<svg class="b" style="left:884.8px;top:691.6px;" width="11.20" height="11.60" viewBox="0 0 12 12"><path d="M9.6 3.2 A4.3 4.3 0 1 0 10.3 6.6" fill="none" stroke="#555" stroke-width="1.3"/><path d="M7.3 0.6 L10.4 3 L7.3 4.4 Z" fill="#555"/></svg>
<div class="b" style="left:912.5px;top:687px;width:210px;height:21.2px;border:2px solid #e4e4e4;box-sizing:border-box;background:#fff;"></div>
<div class="t" style="left:922.5px;top:691.02px;font-size:12.4px;color:#7a7a7a;letter-spacing:-0.066px;">Търсене в Този компютър</div>
<svg class="b" style="left:1101.6px;top:691.6px;" width="12.00" height="12.00" viewBox="0 0 12 12"><circle cx="7.3" cy="4.7" r="3.5" fill="none" stroke="#555" stroke-width="1.3"/><path d="M4.8 7.2 L1 11" stroke="#555" stroke-width="1.5"/></svg>
<div class="b" style="left:112.4px;top:716px;width:12.8px;height:292px;background:#f0f0f0;"></div>
<div class="b" style="left:112.4px;top:734px;width:12.8px;height:218.8px;background:#cdcdcd;"></div>
<svg class="b" style="left:114.8px;top:722.4px;" width="8.00" height="5.20" viewBox="0 0 10 6"><path d="M1 5 L5 1 L9 5" fill="none" stroke="#444" stroke-width="1.8"/></svg>
<svg class="b" style="left:114.8px;top:994px;" width="8.00" height="5.20" viewBox="0 0 10 6"><path d="M1 1 L5 5 L9 1" fill="none" stroke="#444" stroke-width="1.8"/></svg>
<svg class="b" style="left:-3px;top:738.8px;" width="12.00" height="12.00" viewBox="0 0 12 12"><path d="M6 0.6 L7.7 4.2 L11.6 4.7 L8.8 7.4 L9.5 11.3 L6 9.4 L2.5 11.3 L3.2 7.4 L0.4 4.7 L4.3 4.2 Z" fill="#3a8fd8"/></svg>
<div class="t" style="left:12.5px;top:738.62px;font-size:12.4px;color:#1a1a1a;letter-spacing:0.24px;">Лента с инструм</div>
<div class="b" style="left:-2px;top:764px;width:18.8px;height:13.2px;background:#1c8ce0;border-radius:1.2px;"></div>
<div class="t" style="left:21px;top:764.02px;font-size:12.4px;color:#1a1a1a;letter-spacing:-0.018px;">Работен пло</div>
<svg class="b" style="left:99.2px;top:766.2px;" width="8.00" height="8.80" viewBox="0 0 8 9"><path d="M5 0.5 L7.5 3 L6 3.6 L4.6 5.6 L4.2 7 L1.6 4.4 L3 4 L4.6 2.2 Z M2.8 5.6 L0.6 8.2" fill="#8a8a8a" stroke="#8a8a8a" stroke-width="0.6"/></svg>
<svg class="b" style="left:0.4px;top:787.2px;" width="14.00" height="16.00" viewBox="0 0 14 16"><path d="M7 1 V10 M2.6 6.4 L7 11 L11.4 6.4" fill="none" stroke="#2a7fd0" stroke-width="2.8"/><rect x="1.6" y="13" width="10.8" height="2" fill="#2a7fd0"/></svg>
<div class="t" style="left:21px;top:788.62px;font-size:12.4px;color:#1a1a1a;letter-spacing:-0.076px;">Изтеглени ф</div>
<svg class="b" style="left:99.2px;top:790.8px;" width="8.00" height="8.80" viewBox="0 0 8 9"><path d="M5 0.5 L7.5 3 L6 3.6 L4.6 5.6 L4.2 7 L1.6 4.4 L3 4 L4.6 2.2 Z M2.8 5.6 L0.6 8.2" fill="#8a8a8a" stroke="#8a8a8a" stroke-width="0.6"/></svg>
<svg class="b" style="left:0px;top:812px;" width="14.00" height="16.00" viewBox="0 0 14 16"><rect x="1" y="0.8" width="11" height="14" fill="#f4f4f4" stroke="#9aa4ae" stroke-width="1"/><path d="M3.4 4.5 H10 M3.4 7.5 H10 M3.4 10.5 H8" stroke="#7a9ab8" stroke-width="1.1"/></svg>
<div class="t" style="left:21px;top:813.42px;font-size:12.4px;color:#1a1a1a;letter-spacing:0.118px;">Документи</div>
<svg class="b" style="left:99.2px;top:815.6px;" width="8.00" height="8.80" viewBox="0 0 8 9"><path d="M5 0.5 L7.5 3 L6 3.6 L4.6 5.6 L4.2 7 L1.6 4.4 L3 4 L4.6 2.2 Z M2.8 5.6 L0.6 8.2" fill="#8a8a8a" stroke="#8a8a8a" stroke-width="0.6"/></svg>
<svg class="b" style="left:-1px;top:838px;" width="16.00" height="14.00" viewBox="0 0 16 14"><rect x="0.6" y="0.8" width="14.6" height="12" fill="#e8f0f8" stroke="#8a9aac" stroke-width="1"/><path d="M1.4 11.6 L6 6.4 L9.2 9.6 L11.4 7.8 L14.4 11.6 Z" fill="#4a90c8"/></svg>
<div class="t" style="left:21px;top:838.62px;font-size:12.4px;color:#1a1a1a;letter-spacing:0.126px;">Картини</div>
<svg class="b" style="left:99.2px;top:840.8px;" width="8.00" height="8.80" viewBox="0 0 8 9"><path d="M5 0.5 L7.5 3 L6 3.6 L4.6 5.6 L4.2 7 L1.6 4.4 L3 4 L4.6 2.2 Z M2.8 5.6 L0.6 8.2" fill="#8a8a8a" stroke="#8a8a8a" stroke-width="0.6"/></svg>
<svg class="b" style="left:0px;top:862.8px;" width="14.00" height="14.80" viewBox="0 0 14 15"><rect x="0.6" y="0.6" width="12.8" height="13.6" fill="#3a3a44"/><rect x="3.4" y="2" width="7.2" height="10.8" fill="#8a8aa0"/><path d="M1.6 2.4 h1 M1.6 5.2 h1 M1.6 8 h1 M1.6 10.8 h1 M11.4 2.4 h1 M11.4 5.2 h1 M11.4 8 h1 M11.4 10.8 h1" stroke="#e8e8e8" stroke-width="1.2"/></svg>
<div class="t" style="left:21px;top:863.62px;font-size:12.4px;color:#1a1a1a;letter-spacing:0.008px;">Видеоклипове</div>
<svg class="b" style="left:1.2px;top:887.2px;" width="12.00" height="16.00" viewBox="0 0 12 16"><path d="M4.6 12.4 V1.6 L11 3.6" fill="none" stroke="#1c86d8" stroke-width="1.7"/><ellipse cx="3" cy="12.6" rx="2.7" ry="2.2" fill="#1c86d8"/></svg>
<div class="t" style="left:21px;top:888.62px;font-size:12.4px;color:#1a1a1a;letter-spacing:0.022px;">Музика</div>
<svg class="b" style="left:-6px;top:922px;" width="14.00" height="10.00" viewBox="0 0 14 10"><path d="M3.6 9.4 H11 A2.6 2.6 0 0 0 11.2 4.2 A4 4 0 0 0 3.6 3.8 A2.9 2.9 0 0 0 3.6 9.4 Z" fill="#2a8ad8"/></svg>
<div class="t" style="left:12.5px;top:921.22px;font-size:12.4px;color:#1a1a1a;letter-spacing:-0.172px;">OneDrive</div>
<div class="b" style="left:-2px;top:950px;width:113.2px;height:22.6px;background:#cce4f7;"></div>
<div class="b" style="left:-4px;top:954.4px;width:10px;height:10.8px;background:#2a8fe0;border:1px solid #1a6fb8;box-sizing:border-box;"></div>
<div class="t" style="left:13px;top:954.62px;font-size:12.4px;color:#1a1a1a;letter-spacing:0.272px;">Този компютър</div>
<svg class="b" style="left:-4px;top:991.2px;" width="12.00" height="9.20" viewBox="0 0 12 9"><path d="M0 2 H12 V7 H0 Z" fill="#8a8a8a"/><path d="M0 2 L2 0 H10 L12 2 Z" fill="#d8d8d8"/></svg>
<div class="t" style="left:12.5px;top:989.62px;font-size:12.4px;color:#1a1a1a;letter-spacing:-0.466px;overflow:hidden;width:98.8px;">Seagate Expansion Drive (J:)</div>
<div class="t" style="left:0.4px;top:1011.34px;font-size:12.2px;color:#1a1a1a;letter-spacing:-0.678px;">елемента</div>
<svg class="b" style="left:140.8px;top:730.8px;" width="5.60" height="9.20" viewBox="0 0 6 10"><path d="M1 1 L5 5 L1 9" fill="none" stroke="#9a9a9a" stroke-width="1.4"/></svg>
<div class="t" style="left:155px;top:727.24px;font-size:15.4px;color:#1f3f8a;letter-spacing:0.066px;-webkit-text-stroke:0.16px;">Папки (7)</div>
<div class="b" style="left:228px;top:735.2px;width:894px;height:1.6px;background:#e6e6e6;"></div>
<svg class="b" style="left:138.8px;top:765.2px;" width="9.60" height="5.60" viewBox="0 0 10 6"><path d="M1 1 L5 5 L9 1" fill="none" stroke="#8a8a8a" stroke-width="1.4"/></svg>
<div class="t" style="left:155px;top:759.64px;font-size:15.4px;color:#1f3f8a;letter-spacing:0.014px;-webkit-text-stroke:0.16px;">Устройства и дискови устройства (4)</div>
<div class="b" style="left:424px;top:767.6px;width:698px;height:1.6px;background:#e6e6e6;"></div>
<svg class="b" style="left:152px;top:801.4px;" width="46.00" height="28.00" viewBox="0 0 46 24"><defs><linearGradient id="dg" x1="0" y1="0" x2="0" y2="1"><stop offset="0" stop-color="#f2f2f2"/><stop offset="1" stop-color="#b8b8b8"/></linearGradient></defs><path d="M3 9 L9 3 H43 L45 9 Z" fill="url(#dg)" stroke="#a8a8a8" stroke-width="0.6"/><path d="M3 9 H45 V18 C30 24 14 22 3 18 Z" fill="#8e8e8e"/><path d="M3 9 H45 V12 H3 Z" fill="#c9c9c9"/><path d="M6 13 H30 V17 C20 19 12 18 6 17 Z" fill="#2a2a2a"/></svg>
<svg class="b" style="left:154px;top:792px;" width="17.20" height="17.20" viewBox="0 0 88 88"><path d="M0 12.4 L35.7 7.6 V42.1 H0 Z M40 6.9 L87.3 0 V41.8 H40 Z M0 45.7 H35.7 V80.3 L0 75.3 Z M40 46.2 H87.3 V88 L40 81.3 Z" fill="#1aa0e8"/></svg>
<div class="t" style="left:206px;top:787.34px;font-size:12.2px;color:#1a1a1a;letter-spacing:-0.018px;">Локален диск (C:)</div>
<div class="b" style="left:206px;top:803.6px;width:195.6px;height:12.4px;background:#e6e6e6;border:1.2px solid #bcbcbc;box-sizing:border-box;"></div>
<div class="b" style="left:207px;top:804.6px;width:77.46px;height:10.4px;background:#26a0da;"></div>
<div class="t" style="left:206px;top:819.34px;font-size:12.2px;color:#6d6d6d;letter-spacing:-0.188px;">71,4 ГБ свободни от 118 ГБ</div>
<svg class="b" style="left:417.6px;top:801.4px;" width="46.00" height="28.00" viewBox="0 0 46 24"><defs><linearGradient id="dg" x1="0" y1="0" x2="0" y2="1"><stop offset="0" stop-color="#f2f2f2"/><stop offset="1" stop-color="#b8b8b8"/></linearGradient></defs><path d="M3 9 L9 3 H43 L45 9 Z" fill="url(#dg)" stroke="#a8a8a8" stroke-width="0.6"/><path d="M3 9 H45 V18 C30 24 14 22 3 18 Z" fill="#8e8e8e"/><path d="M3 9 H45 V12 H3 Z" fill="#c9c9c9"/><path d="M6 13 H30 V17 C20 19 12 18 6 17 Z" fill="#2a2a2a"/></svg>
<div class="t" style="left:470px;top:787.34px;font-size:12.2px;color:#1a1a1a;letter-spacing:0.07px;">Локален диск (D:)</div>
<div class="b" style="left:470px;top:803.6px;width:196px;height:12.4px;background:#e6e6e6;border:1.2px solid #bcbcbc;box-sizing:border-box;"></div>
<div class="b" style="left:471px;top:804.6px;width:46.06px;height:10.4px;background:#26a0da;"></div>
<div class="t" style="left:470px;top:819.34px;font-size:12.2px;color:#6d6d6d;letter-spacing:-0.196px;">716 ГБ свободни от 931 ГБ</div>
<svg class="b" style="left:152px;top:860.4px;" width="46.00" height="28.00" viewBox="0 0 46 24"><defs><linearGradient id="dg" x1="0" y1="0" x2="0" y2="1"><stop offset="0" stop-color="#f2f2f2"/><stop offset="1" stop-color="#b8b8b8"/></linearGradient></defs><path d="M3 9 L9 3 H43 L45 9 Z" fill="url(#dg)" stroke="#a8a8a8" stroke-width="0.6"/><path d="M3 9 H45 V18 C30 24 14 22 3 18 Z" fill="#8e8e8e"/><path d="M3 9 H45 V12 H3 Z" fill="#c9c9c9"/><path d="M6 13 H30 V17 C20 19 12 18 6 17 Z" fill="#2a2a2a"/></svg>
<div class="t" style="left:206px;top:844.74px;font-size:12.2px;color:#1a1a1a;letter-spacing:-0.238px;">Seagate Expansion Drive (J:)</div>
<div class="b" style="left:206px;top:861.6px;width:195.6px;height:12.4px;background:#e6e6e6;border:1.2px solid #bcbcbc;box-sizing:border-box;"></div>
<div class="b" style="left:207px;top:862.6px;width:42.44px;height:10.4px;background:#26a0da;"></div>
<div class="t" style="left:206px;top:877.34px;font-size:12.2px;color:#6d6d6d;letter-spacing:-0.196px;">724 ГБ свободни от 931 ГБ</div>
<svg class="b" style="left:683.2px;top:788.8px;" width="45.00" height="44.00" viewBox="0 0 45 44"><defs><radialGradient id="cdg"><stop offset="0" stop-color="#fff"/><stop offset="0.25" stop-color="#d8d8d8"/><stop offset="1" stop-color="#c4c8cc"/></radialGradient></defs><circle cx="27" cy="15" r="14" fill="url(#cdg)" stroke="#a8a8a8" stroke-width="0.7"/><circle cx="27" cy="15" r="3.4" fill="#f4f4f4" stroke="#999" stroke-width="0.6"/><path d="M2 31 L8 26 H40 L43 31 Z" fill="#dcdcdc"/><path d="M2 31 H43 V38 C28 43 12 41 2 38 Z" fill="#8a8a8a"/><path d="M5 34 H26 V37 C18 39 10 38 5 37 Z" fill="#2a2a2a"/><rect x="16" y="20" width="28" height="11" rx="1" fill="#1a1a1a"/><text x="30" y="29" font-size="9.5" font-weight="bold" text-anchor="middle" fill="#fff" font-family="Liberation Sans, sans-serif">DVD</text></svg>
<div class="t" style="left:736px;top:793.74px;font-size:12.2px;color:#1a1a1a;letter-spacing:-0.252px;">DVD RW устройство (E:)</div>
<svg class="b" style="left:1089.2px;top:1010px;" width="14.00" height="12.80" viewBox="0 0 14 13"><path d="M0.5 1.5 h3 M5 1.5 h8 M0.5 5 h3 M5 5 h8 M0.5 8.5 h3 M5 8.5 h8 M0.5 12 h3 M5 12 h8" stroke="#8a9ab0" stroke-width="1.3"/></svg>
<svg class="b" style="left:1112.8px;top:1009.2px;" width="15.20" height="14.00" viewBox="0 0 15 14"><rect x="0.5" y="0.5" width="14" height="13" fill="#cfe4f8" stroke="#5a9ad8" stroke-width="1"/><rect x="2.6" y="2.8" width="9.8" height="6.6" fill="#5a8ac0"/></svg>
<div class="b" style="left:711px;top:16px;width:417.6px;height:416.6px;background:#f0f0f0;box-shadow:0 0 0 1.4px rgba(120,120,130,.85),0 2px 8px rgba(0,0,0,.4);"></div>
<div class="b" style="left:711px;top:16px;width:417.6px;height:28px;background:#fff;"></div>
<svg class="b" style="left:714.2px;top:20.2px;" width="16.40" height="16.40" viewBox="0 0 16 16"><rect x="0" y="0" width="16" height="16" rx="1" fill="#3a1a78"/><rect x="3.2" y="3.2" width="9.6" height="9.6" rx="1.4" fill="none" stroke="#d8c8f4" stroke-width="1.7"/><rect x="6" y="6" width="4" height="4" fill="#b090e8"/><path d="M8 0.8 V3 M8 13 V15.2 M0.8 8 H3 M13 8 H15.2" stroke="#d8c8f4" stroke-width="1.4"/></svg>
<div class="t" style="left:736.5px;top:22.94px;font-size:12.2px;color:#8f8f8f;letter-spacing:-0.254px;-webkit-text-stroke:0.28px;">CPU-Z</div>
<div class="b" style="left:1005px;top:29.2px;width:10px;height:1.2px;background:#9a9a9a;"></div>
<div class="b" style="left:1053px;top:24.4px;width:10px;height:10px;border:1.2px solid #e2e2e2;box-sizing:border-box;"></div>
<svg class="b" style="left:1099.8px;top:23.6px;" width="10.80" height="10.80" viewBox="0 0 10 10"><path d="M0.5 0.5 L9.5 9.5 M9.5 0.5 L0.5 9.5" stroke="#9a9a9a" stroke-width="1.1"/></svg>
<div class="b" style="left:715.8px;top:67.2px;width:408.8px;height:334.8px;border:2px solid #fdfdfd;border-right-color:#c8c8c8;border-bottom-color:#c8c8c8;box-sizing:border-box;background:#f0f0f0;"></div>
<div class="t" style="left:737.6px;top:50.7px;font-size:11.9px;color:#28288c;letter-spacing:-0.4px;transform:translateX(-50%);-webkit-text-stroke:0.28px;">CPU</div>
<div class="t" style="left:791.8px;top:51.6px;font-size:11.9px;color:#161616;letter-spacing:-0.4px;transform:translateX(-50%);-webkit-text-stroke:0.28px;">Mainboard</div>
<div class="t" style="left:850px;top:51.6px;font-size:11.9px;color:#161616;letter-spacing:-0.4px;transform:translateX(-50%);-webkit-text-stroke:0.28px;">Memory</div>
<div class="t" style="left:897.4px;top:51.6px;font-size:11.9px;color:#161616;letter-spacing:-0.4px;transform:translateX(-50%);-webkit-text-stroke:0.28px;">SPD</div>
<div class="t" style="left:947.2px;top:51.6px;font-size:11.9px;color:#161616;letter-spacing:-0.4px;transform:translateX(-50%);-webkit-text-stroke:0.28px;">Graphics</div>
<div class="t" style="left:996.2px;top:51.6px;font-size:11.9px;color:#161616;letter-spacing:-0.4px;transform:translateX(-50%);-webkit-text-stroke:0.28px;">Bench</div>
<div class="t" style="left:1040px;top:51.6px;font-size:11.9px;color:#161616;letter-spacing:-0.4px;transform:translateX(-50%);-webkit-text-stroke:0.28px;">About</div>
<div class="b" style="left:760.5px;top:48.8px;width:2px;height:18.8px;background:#6e6e6e;"></div>
<div class="b" style="left:762.5px;top:48.8px;width:1.2px;height:18.8px;background:#fff;"></div>
<div class="b" style="left:824px;top:48.8px;width:2px;height:18.8px;background:#6e6e6e;"></div>
<div class="b" style="left:826px;top:48.8px;width:1.2px;height:18.8px;background:#fff;"></div>
<div class="b" style="left:875.5px;top:48.8px;width:2px;height:18.8px;background:#6e6e6e;"></div>
<div class="b" style="left:877.5px;top:48.8px;width:1.2px;height:18.8px;background:#fff;"></div>
<div class="b" style="left:918px;top:48.8px;width:2px;height:18.8px;background:#6e6e6e;"></div>
<div class="b" style="left:920px;top:48.8px;width:1.2px;height:18.8px;background:#fff;"></div>
<div class="b" style="left:975px;top:48.8px;width:2px;height:18.8px;background:#6e6e6e;"></div>
<div class="b" style="left:977px;top:48.8px;width:1.2px;height:18.8px;background:#fff;"></div>
<div class="b" style="left:1019px;top:48.8px;width:2px;height:18.8px;background:#6e6e6e;"></div>
<div class="b" style="left:1021px;top:48.8px;width:1.2px;height:18.8px;background:#fff;"></div>
<div class="b" style="left:1061.5px;top:48.8px;width:2px;height:18.8px;background:#6e6e6e;"></div>
<div class="b" style="left:1063.5px;top:48.8px;width:1.2px;height:18.8px;background:#fff;"></div>
<div class="b" style="left:717.8px;top:66px;width:42.1px;height:3.6px;background:#f0f0f0;"></div>
<div class="t" style="left:719.8px;top:409.98px;font-size:20.8px;color:#9a9a9a;letter-spacing:-0.31px;font-weight:bold;font-style:italic;-webkit-text-stroke:0.28px;">CPU-Z</div>
<div class="t" style="left:795px;top:417.3px;font-size:11.9px;color:#222;letter-spacing:0.04px;-webkit-text-stroke:0.28px;">Ver. 2.17.0.x64</div>
<div class="b bt" style="left:887.4px;top:408.4px;width:58px;height:20.4px;"></div>
<div class="t" style="left:916.4px;top:413.3px;font-size:11.9px;color:#111;letter-spacing:-0.4px;transform:translateX(-50%);-webkit-text-stroke:0.28px;">Tools</div>
<div class="b bt" style="left:945.4px;top:408.4px;width:16.8px;height:20.4px;"></div>
<svg class="b" style="left:950.2px;top:415.8px;" width="7.20" height="4.40" viewBox="0 0 8 5"><path d="M0 0 H8 L4 5 Z" fill="#111"/></svg>
<div class="b bt" style="left:968.2px;top:408.4px;width:76.4px;height:20.4px;"></div>
<div class="t" style="left:1006.4px;top:413.3px;font-size:11.9px;color:#111;letter-spacing:-0.4px;transform:translateX(-50%);-webkit-text-stroke:0.28px;">Validate</div>
<div class="b bt" style="left:1048px;top:408.4px;width:76.2px;height:20.4px;"></div>
<div class="t" style="left:1086.1px;top:413.3px;font-size:11.9px;color:#111;letter-spacing:-0.4px;transform:translateX(-50%);-webkit-text-stroke:0.28px;">Close</div>
<div class="b gb" style="left:720px;top:76.8px;width:400px;height:180.8px;"></div>
<div class="b" style="left:725.2px;top:70.8px;width:54.76px;height:12px;background:#f0f0f0;"></div>
<div class="t" style="left:727.2px;top:71.3px;font-size:11.9px;color:#161616;letter-spacing:-0.4px;-webkit-text-stroke:0.28px;">Processor</div>
<div class="t" style="left:791.9px;top:87.7px;font-size:11.9px;color:#161616;letter-spacing:-0.4px;transform:translateX(-100%);-webkit-text-stroke:0.28px;">Name</div>
<div class="b vb" style="left:798.5px;top:84.7px;width:215.5px;height:16.6px;"></div>
<div class="t" style="left:906.24px;top:87.7px;font-size:11.9px;color:#28288c;letter-spacing:-0.4px;transform:translateX(-50%);-webkit-text-stroke:0.28px;">Intel Core i5 2500K</div>
<div class="t" style="left:791.9px;top:106.2px;font-size:11.9px;color:#161616;letter-spacing:-0.4px;transform:translateX(-100%);-webkit-text-stroke:0.28px;">Code Name</div>
<div class="b vb" style="left:798.5px;top:103.2px;width:111.5px;height:16.6px;"></div>
<div class="t" style="left:854.24px;top:106.2px;font-size:11.9px;color:#28288c;letter-spacing:-0.4px;transform:translateX(-50%);-webkit-text-stroke:0.28px;">Sandy Bridge</div>
<div class="t" style="left:962.9px;top:106.2px;font-size:11.9px;color:#161616;letter-spacing:-0.4px;transform:translateX(-100%);-webkit-text-stroke:0.28px;">Max TDP</div>
<div class="b vb" style="left:968.5px;top:103.2px;width:45.5px;height:16.6px;"></div>
<div class="t" style="left:991.24px;top:106.2px;font-size:11.9px;color:#28288c;letter-spacing:-0.4px;transform:translateX(-50%);-webkit-text-stroke:0.28px;">95.0 W</div>
<div class="t" style="left:791.9px;top:125.2px;font-size:11.9px;color:#161616;letter-spacing:-0.4px;transform:translateX(-100%);-webkit-text-stroke:0.28px;">Package</div>
<div class="b vb" style="left:798.5px;top:122.2px;width:215.5px;height:16.6px;"></div>
<div class="t" style="left:906.24px;top:125.2px;font-size:11.9px;color:#28288c;letter-spacing:-0.4px;transform:translateX(-50%);-webkit-text-stroke:0.28px;">Socket 1155 LGA</div>
<div class="t" style="left:791.9px;top:143.7px;font-size:11.9px;color:#161616;letter-spacing:-0.4px;transform:translateX(-100%);-webkit-text-stroke:0.28px;">Technology</div>
<div class="b vb" style="left:798.5px;top:140.7px;width:56.5px;height:16.6px;"></div>
<div class="t" style="left:826.76px;top:143.7px;font-size:11.9px;color:#28288c;letter-spacing:-0.4px;transform:translateX(-50%);-webkit-text-stroke:0.28px;">32 nm</div>
<div class="t" style="left:934.4px;top:143.7px;font-size:11.9px;color:#161616;letter-spacing:-0.4px;transform:translateX(-100%);-webkit-text-stroke:0.28px;">Core Voltage</div>
<div class="b vb" style="left:941.5px;top:140.7px;width:72.5px;height:16.6px;"></div>
<div class="t" style="left:977.76px;top:143.7px;font-size:11.9px;color:#28288c;letter-spacing:-0.4px;transform:translateX(-50%);-webkit-text-stroke:0.28px;">1.144 V</div>
<svg class="b" style="left:1020px;top:84px;" width="97.60" height="72.00" viewBox="0 0 98 72"><defs><linearGradient id="ib" x1="0" y1="0" x2="0.25" y2="1"><stop offset="0" stop-color="#0a4688"/><stop offset="0.55" stop-color="#1272ba"/><stop offset="1" stop-color="#1c94dc"/></linearGradient><linearGradient id="ig" x1="0" y1="0" x2="1" y2="0"><stop offset="0" stop-color="#c8a428"/><stop offset="0.5" stop-color="#e8cc48"/><stop offset="1" stop-color="#e0bc30"/></linearGradient></defs><rect x="0.6" y="0.6" width="96.8" height="70.8" rx="6" fill="url(#ib)" stroke="#d4e6f4" stroke-width="1.3"/><path d="M2 51 H65 L75 44 H96 V56 H2 Z" fill="#0c5ea6" opacity="0.55"/><path d="M2 43 H62 L72 37 H96 V44 H75 L65 51 H2 Z" fill="url(#ig)"/><path d="M55 15 A24.5 16 -12 1 0 57 30" fill="none" stroke="#fff" stroke-width="2.4" stroke-linecap="round"/><text x="33.5" y="29" font-size="19.5" font-weight="bold" text-anchor="middle" fill="#fff" font-family="Liberation Sans, sans-serif" textLength="37" lengthAdjust="spacingAndGlyphs">intel</text><text x="75" y="27.5" font-size="9" font-style="italic" font-weight="bold" text-anchor="middle" fill="#eef6ff" font-family="Liberation Sans, sans-serif" textLength="27" lengthAdjust="spacingAndGlyphs">inside</text><text x="45.5" y="66" font-size="13.5" text-anchor="middle" fill="#dcf0ff" stroke="#dcf0ff" stroke-width="0.5" font-family="Liberation Sans, sans-serif" textLength="60" lengthAdjust="spacingAndGlyphs">CORE i5</text></svg>
<div class="t" style="left:791.9px;top:168.7px;font-size:11.9px;color:#161616;letter-spacing:-0.4px;transform:translateX(-100%);-webkit-text-stroke:0.28px;">Specification</div>
<div class="b vb" style="left:798.5px;top:165.7px;width:315.5px;height:16.6px;"></div>
<div class="t" style="left:956.24px;top:168.7px;font-size:11.9px;color:#28288c;letter-spacing:-0.4px;transform:translateX(-50%);-webkit-text-stroke:0.28px;">Intel® Core™ i5-2500K CPU @ 3.30GHz</div>
<div class="t" style="left:791.9px;top:187.2px;font-size:11.9px;color:#161616;letter-spacing:-0.4px;transform:translateX(-100%);-webkit-text-stroke:0.28px;">Family</div>
<div class="b vb" style="left:798.5px;top:184.2px;width:54px;height:16.6px;"></div>
<div class="t" style="left:825.5px;top:187.2px;font-size:11.9px;color:#28288c;letter-spacing:-0.4px;transform:translateX(-50%);-webkit-text-stroke:0.28px;">6</div>
<div class="t" style="left:923.9px;top:187.2px;font-size:11.9px;color:#161616;letter-spacing:-0.4px;transform:translateX(-100%);-webkit-text-stroke:0.28px;">Model</div>
<div class="b vb" style="left:931px;top:184.2px;width:53px;height:16.6px;"></div>
<div class="t" style="left:957.5px;top:187.2px;font-size:11.9px;color:#28288c;letter-spacing:-0.4px;transform:translateX(-50%);-webkit-text-stroke:0.28px;">A</div>
<div class="t" style="left:1050.4px;top:187.2px;font-size:11.9px;color:#161616;letter-spacing:-0.4px;transform:translateX(-100%);-webkit-text-stroke:0.28px;">Stepping</div>
<div class="b vb" style="left:1061px;top:184.2px;width:53px;height:16.6px;"></div>
<div class="t" style="left:1087.5px;top:187.2px;font-size:11.9px;color:#28288c;letter-spacing:-0.4px;transform:translateX(-50%);-webkit-text-stroke:0.28px;">7</div>
<div class="t" style="left:791.9px;top:206.2px;font-size:11.9px;color:#161616;letter-spacing:-0.4px;transform:translateX(-100%);-webkit-text-stroke:0.28px;">Ext. Family</div>
<div class="b vb" style="left:798.5px;top:203.2px;width:54px;height:16.6px;"></div>
<div class="t" style="left:825.5px;top:206.2px;font-size:11.9px;color:#28288c;letter-spacing:-0.4px;transform:translateX(-50%);-webkit-text-stroke:0.28px;">6</div>
<div class="t" style="left:923.9px;top:205.3px;font-size:11.9px;color:#161616;letter-spacing:-0.4px;transform:translateX(-100%);-webkit-text-stroke:0.28px;">Ext. Model</div>
<div class="b vb" style="left:931px;top:203.2px;width:53px;height:16.6px;"></div>
<div class="t" style="left:957.5px;top:206.2px;font-size:11.9px;color:#28288c;letter-spacing:-0.4px;transform:translateX(-50%);-webkit-text-stroke:0.28px;">2A</div>
<div class="t" style="left:1050.4px;top:206.2px;font-size:11.9px;color:#161616;letter-spacing:-0.4px;transform:translateX(-100%);-webkit-text-stroke:0.28px;">Revision</div>
<div class="b vb" style="left:1061px;top:203.2px;width:53px;height:16.6px;"></div>
<div class="t" style="left:1087.5px;top:206.2px;font-size:11.9px;color:#28288c;letter-spacing:-0.4px;transform:translateX(-50%);-webkit-text-stroke:0.28px;">D2</div>
<div class="t" style="left:791.9px;top:225.2px;font-size:11.9px;color:#161616;letter-spacing:-0.4px;transform:translateX(-100%);-webkit-text-stroke:0.28px;">Instructions</div>
<div class="b vb" style="left:798.5px;top:220px;width:315.5px;height:30.8px;"></div>
<div class="t" style="left:801.5px;top:225.2px;font-size:11.9px;color:#28288c;letter-spacing:-0.39px;-webkit-text-stroke:0.28px;">MMX, SSE (1, 2, 3, 4.1, 4.2), SSSE3, EM64T, VT-x, AES, AVX</div>
<div class="b gb" style="left:720px;top:270px;width:185px;height:90px;"></div>
<div class="b" style="left:725.2px;top:264px;width:87.66px;height:12px;background:#f0f0f0;"></div>
<div class="t" style="left:727.2px;top:264.5px;font-size:11.9px;color:#161616;letter-spacing:-0.4px;-webkit-text-stroke:0.28px;">Clocks (Core #0)</div>
<div class="b gb" style="left:909px;top:270px;width:211px;height:90px;"></div>
<div class="b" style="left:914.2px;top:264px;width:37.2px;height:12px;background:#f0f0f0;"></div>
<div class="t" style="left:916.2px;top:264.5px;font-size:11.9px;color:#161616;letter-spacing:-0.4px;-webkit-text-stroke:0.28px;">Cache</div>
<div class="t" style="left:790.4px;top:282.2px;font-size:11.9px;color:#161616;letter-spacing:-0.4px;transform:translateX(-100%);-webkit-text-stroke:0.28px;">Core Speed</div>
<div class="b vb" style="left:797.5px;top:279.2px;width:104px;height:16.6px;"></div>
<div class="t" style="left:849.5px;top:282.2px;font-size:11.9px;color:#28288c;letter-spacing:-0.4px;transform:translateX(-50%);-webkit-text-stroke:0.28px;">3491.52 MHz</div>
<div class="t" style="left:790.4px;top:301.2px;font-size:11.9px;color:#161616;letter-spacing:-0.4px;transform:translateX(-100%);-webkit-text-stroke:0.28px;">Multiplier</div>
<div class="b vb" style="left:797.5px;top:298.2px;width:104px;height:16.6px;"></div>
<div class="t" style="left:849.5px;top:301.2px;font-size:11.9px;color:#28288c;letter-spacing:-0.4px;transform:translateX(-50%);-webkit-text-stroke:0.28px;">x35.0 (16.0 - 37.0)</div>
<div class="t" style="left:790.4px;top:319.7px;font-size:11.9px;color:#161616;letter-spacing:-0.4px;transform:translateX(-100%);-webkit-text-stroke:0.28px;">Bus Speed</div>
<div class="b vb" style="left:797.5px;top:316.7px;width:104px;height:16.6px;"></div>
<div class="t" style="left:849.5px;top:319.7px;font-size:11.9px;color:#28288c;letter-spacing:-0.4px;transform:translateX(-50%);-webkit-text-stroke:0.28px;">99.76 MHz</div>
<div class="t" style="left:790.4px;top:337.7px;font-size:11.9px;color:#a4a4a4;letter-spacing:-0.4px;transform:translateX(-100%);-webkit-text-stroke:0.28px;">Rated FSB</div>
<div class="b vb" style="left:797.5px;top:334.7px;width:104px;height:16.6px;"></div>
<div class="t" style="left:956.9px;top:282.2px;font-size:11.9px;color:#161616;letter-spacing:-0.4px;transform:translateX(-100%);-webkit-text-stroke:0.28px;">L1 Data</div>
<div class="b vb" style="left:962.5px;top:279.2px;width:98.5px;height:16.6px;"></div>
<div class="t" style="left:1011.76px;top:282.2px;font-size:11.9px;color:#28288c;letter-spacing:-0.4px;transform:translateX(-50%);-webkit-text-stroke:0.28px;">4 x 32 KBytes</div>
<div class="b vb" style="left:1065px;top:279.2px;width:50px;height:16.6px;"></div>
<div class="t" style="left:1090px;top:282.2px;font-size:11.9px;color:#28288c;letter-spacing:-0.4px;transform:translateX(-50%);-webkit-text-stroke:0.28px;">8-way</div>
<div class="t" style="left:956.9px;top:301.2px;font-size:11.9px;color:#161616;letter-spacing:-0.4px;transform:translateX(-100%);-webkit-text-stroke:0.28px;">L1 Inst.</div>
<div class="b vb" style="left:962.5px;top:298.2px;width:98.5px;height:16.6px;"></div>
<div class="t" style="left:1011.76px;top:301.2px;font-size:11.9px;color:#28288c;letter-spacing:-0.4px;transform:translateX(-50%);-webkit-text-stroke:0.28px;">4 x 32 KBytes</div>
<div class="b vb" style="left:1065px;top:298.2px;width:50px;height:16.6px;"></div>
<div class="t" style="left:1090px;top:301.2px;font-size:11.9px;color:#28288c;letter-spacing:-0.4px;transform:translateX(-50%);-webkit-text-stroke:0.28px;">8-way</div>
<div class="t" style="left:956.9px;top:319.7px;font-size:11.9px;color:#161616;letter-spacing:-0.4px;transform:translateX(-100%);-webkit-text-stroke:0.28px;">Level 2</div>
<div class="b vb" style="left:962.5px;top:316.7px;width:98.5px;height:16.6px;"></div>
<div class="t" style="left:1011.76px;top:319.7px;font-size:11.9px;color:#28288c;letter-spacing:-0.4px;transform:translateX(-50%);-webkit-text-stroke:0.28px;">4 x 256 KBytes</div>
<div class="b vb" style="left:1065px;top:316.7px;width:50px;height:16.6px;"></div>
<div class="t" style="left:1090px;top:319.7px;font-size:11.9px;color:#28288c;letter-spacing:-0.4px;transform:translateX(-50%);-webkit-text-stroke:0.28px;">8-way</div>
<div class="t" style="left:956.9px;top:337.7px;font-size:11.9px;color:#161616;letter-spacing:-0.4px;transform:translateX(-100%);-webkit-text-stroke:0.28px;">Level 3</div>
<div class="b vb" style="left:962.5px;top:334.7px;width:98.5px;height:16.6px;"></div>
<div class="t" style="left:1011.76px;top:337.7px;font-size:11.9px;color:#28288c;letter-spacing:-0.4px;transform:translateX(-50%);-webkit-text-stroke:0.28px;">6 MBytes</div>
<div class="b vb" style="left:1065px;top:334.7px;width:50px;height:16.6px;"></div>
<div class="t" style="left:1090px;top:337.7px;font-size:11.9px;color:#28288c;letter-spacing:-0.4px;transform:translateX(-50%);-webkit-text-stroke:0.28px;">12-way</div>
<div class="b gb" style="left:720px;top:365px;width:400px;height:35px;"></div>
<div class="t" style="left:787.9px;top:377.2px;font-size:11.9px;color:#161616;letter-spacing:-0.4px;transform:translateX(-100%);-webkit-text-stroke:0.28px;">Selection</div>
<div class="b" style="left:798.5px;top:373.1px;width:95.5px;height:18.8px;background:#f0f0f0;border:2px solid #8c8c8c;box-sizing:border-box;border-right-color:#e8e8e8;border-bottom-color:#e8e8e8;"></div>
<div class="t" style="left:801.7px;top:377.2px;font-size:11.9px;color:#a4a4a4;letter-spacing:-0.4px;-webkit-text-stroke:0.28px;">Socket #1</div>
<div class="b" style="left:876px;top:375.1px;width:16.4px;height:14.8px;background:#ececec;border:2px solid #fafafa;border-right-color:#7a7a7a;border-bottom-color:#7a7a7a;box-sizing:border-box;"></div>
<svg class="b" style="left:880.2px;top:380.7px;" width="7.20" height="4.40" viewBox="0 0 8 5"><path d="M0 0 H8 L4 5 Z" fill="#9a9a9a"/></svg>
<div class="t" style="left:906px;top:377.2px;font-size:11.9px;color:#161616;letter-spacing:-0.4px;-webkit-text-stroke:0.28px;">Cores</div>
<div class="b vb" style="left:941px;top:374.2px;width:71.5px;height:16.6px;"></div>
<div class="t" style="left:976.76px;top:377.2px;font-size:11.9px;color:#28288c;letter-spacing:-0.4px;transform:translateX(-50%);-webkit-text-stroke:0.28px;">4</div>
<div class="t" style="left:1022.5px;top:377.2px;font-size:11.9px;color:#161616;letter-spacing:-0.4px;-webkit-text-stroke:0.28px;">Threads</div>
<div class="b vb" style="left:1070px;top:374.2px;width:44px;height:16.6px;"></div>
<div class="t" style="left:1092px;top:377.2px;font-size:11.9px;color:#28288c;letter-spacing:-0.4px;transform:translateX(-50%);-webkit-text-stroke:0.28px;">4</div>
<div class="b" style="left:1137.5px;top:14px;width:417.6px;height:416.6px;background:#f0f0f0;box-shadow:0 0 0 1.4px rgba(120,120,130,.85),0 2px 8px rgba(0,0,0,.4);"></div>
<div class="b" style="left:1137.5px;top:14px;width:417.6px;height:28px;background:#fff;"></div>
<svg class="b" style="left:1140.7px;top:18.2px;" width="16.40" height="16.40" viewBox="0 0 16 16"><rect x="0" y="0" width="16" height="16" rx="1" fill="#3a1a78"/><rect x="3.2" y="3.2" width="9.6" height="9.6" rx="1.4" fill="none" stroke="#d8c8f4" stroke-width="1.7"/><rect x="6" y="6" width="4" height="4" fill="#b090e8"/><path d="M8 0.8 V3 M8 13 V15.2 M0.8 8 H3 M13 8 H15.2" stroke="#d8c8f4" stroke-width="1.4"/></svg>
<div class="t" style="left:1163px;top:20.94px;font-size:12.2px;color:#8f8f8f;letter-spacing:-0.254px;-webkit-text-stroke:0.28px;">CPU-Z</div>
<div class="b" style="left:1431.5px;top:27.2px;width:10px;height:1.2px;background:#9a9a9a;"></div>
<div class="b" style="left:1479.5px;top:22.4px;width:10px;height:10px;border:1.2px solid #e2e2e2;box-sizing:border-box;"></div>
<svg class="b" style="left:1526.3px;top:21.6px;" width="10.80" height="10.80" viewBox="0 0 10 10"><path d="M0.5 0.5 L9.5 9.5 M9.5 0.5 L0.5 9.5" stroke="#9a9a9a" stroke-width="1.1"/></svg>
<div class="b" style="left:1142.3px;top:65.2px;width:408.8px;height:334.8px;border:2px solid #fdfdfd;border-right-color:#c8c8c8;border-bottom-color:#c8c8c8;box-sizing:border-box;background:#f0f0f0;"></div>
<div class="t" style="left:1164.1px;top:49.6px;font-size:11.9px;color:#161616;letter-spacing:-0.4px;transform:translateX(-50%);-webkit-text-stroke:0.28px;">CPU</div>
<div class="t" style="left:1218.3px;top:48.7px;font-size:11.9px;color:#28288c;letter-spacing:-0.4px;transform:translateX(-50%);-webkit-text-stroke:0.28px;">Mainboard</div>
<div class="t" style="left:1276.5px;top:49.6px;font-size:11.9px;color:#161616;letter-spacing:-0.4px;transform:translateX(-50%);-webkit-text-stroke:0.28px;">Memory</div>
<div class="t" style="left:1323.9px;top:49.6px;font-size:11.9px;color:#161616;letter-spacing:-0.4px;transform:translateX(-50%);-webkit-text-stroke:0.28px;">SPD</div>
<div class="t" style="left:1373.7px;top:49.6px;font-size:11.9px;color:#161616;letter-spacing:-0.4px;transform:translateX(-50%);-webkit-text-stroke:0.28px;">Graphics</div>
<div class="t" style="left:1422.7px;top:49.6px;font-size:11.9px;color:#161616;letter-spacing:-0.4px;transform:translateX(-50%);-webkit-text-stroke:0.28px;">Bench</div>
<div class="t" style="left:1466.5px;top:49.6px;font-size:11.9px;color:#161616;letter-spacing:-0.4px;transform:translateX(-50%);-webkit-text-stroke:0.28px;">About</div>
<div class="b" style="left:1250.5px;top:46.8px;width:2px;height:18.8px;background:#6e6e6e;"></div>
<div class="b" style="left:1252.5px;top:46.8px;width:1.2px;height:18.8px;background:#fff;"></div>
<div class="b" style="left:1302px;top:46.8px;width:2px;height:18.8px;background:#6e6e6e;"></div>
<div class="b" style="left:1304px;top:46.8px;width:1.2px;height:18.8px;background:#fff;"></div>
<div class="b" style="left:1344.5px;top:46.8px;width:2px;height:18.8px;background:#6e6e6e;"></div>
<div class="b" style="left:1346.5px;top:46.8px;width:1.2px;height:18.8px;background:#fff;"></div>
<div class="b" style="left:1401.5px;top:46.8px;width:2px;height:18.8px;background:#6e6e6e;"></div>
<div class="b" style="left:1403.5px;top:46.8px;width:1.2px;height:18.8px;background:#fff;"></div>
<div class="b" style="left:1445.5px;top:46.8px;width:2px;height:18.8px;background:#6e6e6e;"></div>
<div class="b" style="left:1447.5px;top:46.8px;width:1.2px;height:18.8px;background:#fff;"></div>
<div class="b" style="left:1488px;top:46.8px;width:2px;height:18.8px;background:#6e6e6e;"></div>
<div class="b" style="left:1490px;top:46.8px;width:1.2px;height:18.8px;background:#fff;"></div>
<div class="b" style="left:1189.2px;top:64px;width:60.7px;height:3.6px;background:#f0f0f0;"></div>
<div class="t" style="left:1146.3px;top:407.98px;font-size:20.8px;color:#9a9a9a;letter-spacing:-0.31px;font-weight:bold;font-style:italic;-webkit-text-stroke:0.28px;">CPU-Z</div>
<div class="t" style="left:1221.5px;top:415.3px;font-size:11.9px;color:#222;letter-spacing:0.04px;-webkit-text-stroke:0.28px;">Ver. 2.17.0.x64</div>
<div class="b bt" style="left:1313.9px;top:406.4px;width:58px;height:20.4px;"></div>
<div class="t" style="left:1342.9px;top:411.3px;font-size:11.9px;color:#111;letter-spacing:-0.4px;transform:translateX(-50%);-webkit-text-stroke:0.28px;">Tools</div>
<div class="b bt" style="left:1371.9px;top:406.4px;width:16.8px;height:20.4px;"></div>
<svg class="b" style="left:1376.7px;top:413.8px;" width="7.20" height="4.40" viewBox="0 0 8 5"><path d="M0 0 H8 L4 5 Z" fill="#111"/></svg>
<div class="b bt" style="left:1394.7px;top:406.4px;width:76.4px;height:20.4px;"></div>
<div class="t" style="left:1432.9px;top:411.3px;font-size:11.9px;color:#111;letter-spacing:-0.4px;transform:translateX(-50%);-webkit-text-stroke:0.28px;">Validate</div>
<div class="b bt" style="left:1474.5px;top:406.4px;width:76.2px;height:20.4px;"></div>
<div class="t" style="left:1512.6px;top:411.3px;font-size:11.9px;color:#111;letter-spacing:-0.4px;transform:translateX(-50%);-webkit-text-stroke:0.28px;">Close</div>
<div class="b gb" style="left:1146px;top:75px;width:401.5px;height:136px;"></div>
<div class="b" style="left:1151.2px;top:69px;width:67.86px;height:12px;background:#f0f0f0;"></div>
<div class="t" style="left:1153.2px;top:69.5px;font-size:11.9px;color:#161616;letter-spacing:-0.4px;-webkit-text-stroke:0.28px;">Motherboard</div>
<div class="t" style="left:1219.4px;top:89.7px;font-size:11.9px;color:#161616;letter-spacing:-0.4px;transform:translateX(-100%);-webkit-text-stroke:0.28px;">Manufacturer</div>
<div class="b vb" style="left:1227.5px;top:86.7px;width:307.5px;height:16.6px;"></div>
<div class="t" style="left:1230.7px;top:89.7px;font-size:11.9px;color:#28288c;letter-spacing:-0.4px;-webkit-text-stroke:0.28px;">ASUSTeK COMPUTER INC.</div>
<div class="t" style="left:1219.4px;top:108.7px;font-size:11.9px;color:#161616;letter-spacing:-0.4px;transform:translateX(-100%);-webkit-text-stroke:0.28px;">Model</div>
<div class="b vb" style="left:1227.5px;top:105.7px;width:196.5px;height:16.6px;"></div>
<div class="t" style="left:1230.7px;top:108.7px;font-size:11.9px;color:#28288c;letter-spacing:-0.4px;-webkit-text-stroke:0.28px;">P8B75-M LE</div>
<div class="b vb" style="left:1427.5px;top:105.7px;width:107.5px;height:16.6px;"></div>
<div class="t" style="left:1481.24px;top:108.7px;font-size:11.9px;color:#28288c;letter-spacing:-0.4px;transform:translateX(-50%);-webkit-text-stroke:0.28px;">Rev X.0x</div>
<div class="t" style="left:1219.4px;top:128.2px;font-size:11.9px;color:#161616;letter-spacing:-0.4px;transform:translateX(-100%);-webkit-text-stroke:0.28px;">Bus Specs.</div>
<div class="b vb" style="left:1227.5px;top:125.2px;width:307.5px;height:16.6px;"></div>
<div class="t" style="left:1230.7px;top:128.2px;font-size:11.9px;color:#28288c;letter-spacing:-0.4px;-webkit-text-stroke:0.28px;">PCI-Express 2.0 (5.0 GT/s)</div>
<div class="t" style="left:1219.4px;top:152.7px;font-size:11.9px;color:#161616;letter-spacing:-0.4px;transform:translateX(-100%);-webkit-text-stroke:0.28px;">Chipset</div>
<div class="b vb" style="left:1227.5px;top:149.7px;width:70px;height:16.6px;"></div>
<div class="t" style="left:1262.5px;top:152.7px;font-size:11.9px;color:#28288c;letter-spacing:-0.4px;transform:translateX(-50%);-webkit-text-stroke:0.28px;">Intel</div>
<div class="b vb" style="left:1302.5px;top:149.7px;width:160px;height:16.6px;"></div>
<div class="t" style="left:1382.5px;top:152.7px;font-size:11.9px;color:#28288c;letter-spacing:-0.4px;transform:translateX(-50%);-webkit-text-stroke:0.28px;">Sandy Bridge</div>
<div class="t" style="left:1470px;top:152.7px;font-size:11.9px;color:#161616;letter-spacing:-0.4px;-webkit-text-stroke:0.28px;">Rev.</div>
<div class="b vb" style="left:1499px;top:149.7px;width:36px;height:16.6px;"></div>
<div class="t" style="left:1517px;top:152.7px;font-size:11.9px;color:#28288c;letter-spacing:-0.4px;transform:translateX(-50%);-webkit-text-stroke:0.28px;">09</div>
<div class="t" style="left:1219.4px;top:171.7px;font-size:11.9px;color:#161616;letter-spacing:-0.4px;transform:translateX(-100%);-webkit-text-stroke:0.28px;">Southbridge</div>
<div class="b vb" style="left:1227.5px;top:168.7px;width:70px;height:16.6px;"></div>
<div class="t" style="left:1262.5px;top:171.7px;font-size:11.9px;color:#28288c;letter-spacing:-0.4px;transform:translateX(-50%);-webkit-text-stroke:0.28px;">Intel</div>
<div class="b vb" style="left:1302.5px;top:168.7px;width:160px;height:16.6px;"></div>
<div class="t" style="left:1382.5px;top:171.7px;font-size:11.9px;color:#28288c;letter-spacing:-0.4px;transform:translateX(-50%);-webkit-text-stroke:0.28px;">P75/B75</div>
<div class="t" style="left:1470px;top:171.7px;font-size:11.9px;color:#161616;letter-spacing:-0.4px;-webkit-text-stroke:0.28px;">Rev.</div>
<div class="b vb" style="left:1499px;top:168.7px;width:36px;height:16.6px;"></div>
<div class="t" style="left:1517px;top:171.7px;font-size:11.9px;color:#28288c;letter-spacing:-0.4px;transform:translateX(-50%);-webkit-text-stroke:0.28px;">04</div>
<div class="t" style="left:1219.4px;top:190.2px;font-size:11.9px;color:#161616;letter-spacing:-0.4px;transform:translateX(-100%);-webkit-text-stroke:0.28px;">LPCIO</div>
<div class="b vb" style="left:1227.5px;top:187.2px;width:70px;height:16.6px;"></div>
<div class="t" style="left:1262.5px;top:190.2px;font-size:11.9px;color:#28288c;letter-spacing:-0.4px;transform:translateX(-50%);-webkit-text-stroke:0.28px;">Nuvoton</div>
<div class="b vb" style="left:1302.5px;top:187.2px;width:160px;height:16.6px;"></div>
<div class="t" style="left:1382.5px;top:190.2px;font-size:11.9px;color:#28288c;letter-spacing:-0.4px;transform:translateX(-50%);-webkit-text-stroke:0.28px;">NCT6779</div>
<div class="b gb" style="left:1146px;top:224.5px;width:401.5px;height:74px;"></div>
<div class="b" style="left:1151.2px;top:218.5px;width:31.64px;height:12px;background:#f0f0f0;"></div>
<div class="t" style="left:1153.2px;top:219px;font-size:11.9px;color:#161616;letter-spacing:-0.4px;-webkit-text-stroke:0.28px;">BIOS</div>
<div class="t" style="left:1219.4px;top:239.2px;font-size:11.9px;color:#161616;letter-spacing:-0.4px;transform:translateX(-100%);-webkit-text-stroke:0.28px;">Brand</div>
<div class="b vb" style="left:1227.5px;top:236.2px;width:307.5px;height:16.6px;"></div>
<div class="t" style="left:1230.7px;top:239.2px;font-size:11.9px;color:#28288c;letter-spacing:-0.4px;-webkit-text-stroke:0.28px;">American Megatrends Inc.</div>
<div class="t" style="left:1219.4px;top:258.2px;font-size:11.9px;color:#161616;letter-spacing:-0.4px;transform:translateX(-100%);-webkit-text-stroke:0.28px;">Version</div>
<div class="b vb" style="left:1227.5px;top:255.2px;width:307.5px;height:16.6px;"></div>
<div class="t" style="left:1230.7px;top:258.2px;font-size:11.9px;color:#28288c;letter-spacing:-0.4px;-webkit-text-stroke:0.28px;">0804</div>
<div class="t" style="left:1219.4px;top:277.2px;font-size:11.9px;color:#161616;letter-spacing:-0.4px;transform:translateX(-100%);-webkit-text-stroke:0.28px;">Date</div>
<div class="b vb" style="left:1227.5px;top:274.2px;width:140px;height:16.6px;"></div>
<div class="t" style="left:1230.7px;top:277.2px;font-size:11.9px;color:#28288c;letter-spacing:-0.4px;-webkit-text-stroke:0.28px;">10/16/2012</div>
<div class="t" style="left:1455.4px;top:277.9px;font-size:11.9px;color:#161616;letter-spacing:-0.4px;transform:translateX(-100%);-webkit-text-stroke:0.28px;">CPU Microcode</div>
<div class="b vb" style="left:1465px;top:274.2px;width:70px;height:16.6px;"></div>
<div class="t" style="left:1500px;top:277.2px;font-size:11.9px;color:#28288c;letter-spacing:-0.4px;transform:translateX(-50%);-webkit-text-stroke:0.28px;">0x2F</div>
<div class="b gb" style="left:1146px;top:314px;width:401.5px;height:72px;"></div>
<div class="b" style="left:1151.2px;top:308px;width:89.28px;height:12px;background:#f0f0f0;"></div>
<div class="t" style="left:1153.2px;top:308.5px;font-size:11.9px;color:#161616;letter-spacing:-0.4px;-webkit-text-stroke:0.28px;">Graphic Interface</div>
<div class="t" style="left:1260.4px;top:327.7px;font-size:11.9px;color:#161616;letter-spacing:-0.4px;transform:translateX(-100%);-webkit-text-stroke:0.28px;">Bus</div>
<div class="b vb" style="left:1270px;top:324.7px;width:265px;height:16.6px;"></div>
<div class="t" style="left:1402.5px;top:327.7px;font-size:11.9px;color:#28288c;letter-spacing:-0.4px;transform:translateX(-50%);-webkit-text-stroke:0.28px;">PCI-Express 2.0</div>
<div class="t" style="left:1261.9px;top:346.2px;font-size:11.9px;color:#161616;letter-spacing:-0.4px;transform:translateX(-100%);-webkit-text-stroke:0.28px;">Current Link Width</div>
<div class="b vb" style="left:1270px;top:343.2px;width:85px;height:16.6px;"></div>
<div class="t" style="left:1312.5px;top:346.2px;font-size:11.9px;color:#28288c;letter-spacing:-0.4px;transform:translateX(-50%);-webkit-text-stroke:0.28px;">x16</div>
<div class="t" style="left:1445.4px;top:346.2px;font-size:11.9px;color:#161616;letter-spacing:-0.4px;transform:translateX(-100%);-webkit-text-stroke:0.28px;">Max. Supported</div>
<div class="b vb" style="left:1452.5px;top:343.2px;width:82.5px;height:16.6px;"></div>
<div class="t" style="left:1493.76px;top:346.2px;font-size:11.9px;color:#28288c;letter-spacing:-0.4px;transform:translateX(-50%);-webkit-text-stroke:0.28px;">x16</div>
<div class="t" style="left:1261.9px;top:364.7px;font-size:11.9px;color:#161616;letter-spacing:-0.4px;transform:translateX(-100%);-webkit-text-stroke:0.28px;">Current Link Speed</div>
<div class="b vb" style="left:1270px;top:361.7px;width:85px;height:16.6px;"></div>
<div class="t" style="left:1312.5px;top:364.7px;font-size:11.9px;color:#28288c;letter-spacing:-0.4px;transform:translateX(-50%);-webkit-text-stroke:0.28px;">2.5 GT/s</div>
<div class="t" style="left:1445.4px;top:364.7px;font-size:11.9px;color:#161616;letter-spacing:-0.4px;transform:translateX(-100%);-webkit-text-stroke:0.28px;">Max. Supported</div>
<div class="b vb" style="left:1452.5px;top:361.7px;width:82.5px;height:16.6px;"></div>
<div class="t" style="left:1493.76px;top:364.7px;font-size:11.9px;color:#28288c;letter-spacing:-0.4px;transform:translateX(-50%);-webkit-text-stroke:0.28px;">5.0 GT/s</div>
<div class="b" style="left:1565.6px;top:13.4px;width:417.6px;height:416.6px;background:#f0f0f0;box-shadow:0 0 0 1.4px rgba(120,120,130,.85),0 2px 8px rgba(0,0,0,.4);"></div>
<div class="b" style="left:1565.6px;top:13.4px;width:417.6px;height:28px;background:#fff;"></div>
<svg class="b" style="left:1568.8px;top:17.6px;" width="16.40" height="16.40" viewBox="0 0 16 16"><rect x="0" y="0" width="16" height="16" rx="1" fill="#3a1a78"/><rect x="3.2" y="3.2" width="9.6" height="9.6" rx="1.4" fill="none" stroke="#d8c8f4" stroke-width="1.7"/><rect x="6" y="6" width="4" height="4" fill="#b090e8"/><path d="M8 0.8 V3 M8 13 V15.2 M0.8 8 H3 M13 8 H15.2" stroke="#d8c8f4" stroke-width="1.4"/></svg>
<div class="t" style="left:1591.1px;top:20.34px;font-size:12.2px;color:#8f8f8f;letter-spacing:-0.254px;-webkit-text-stroke:0.28px;">CPU-Z</div>
<div class="b" style="left:1859.6px;top:26.6px;width:10px;height:1.2px;background:#9a9a9a;"></div>
<div class="b" style="left:1907.6px;top:21.8px;width:10px;height:10px;border:1.2px solid #e2e2e2;box-sizing:border-box;"></div>
<svg class="b" style="left:1954.4px;top:21px;" width="10.80" height="10.80" viewBox="0 0 10 10"><path d="M0.5 0.5 L9.5 9.5 M9.5 0.5 L0.5 9.5" stroke="#9a9a9a" stroke-width="1.1"/></svg>
<div class="b" style="left:1570.4px;top:64.6px;width:408.8px;height:334.8px;border:2px solid #fdfdfd;border-right-color:#c8c8c8;border-bottom-color:#c8c8c8;box-sizing:border-box;background:#f0f0f0;"></div>
<div class="t" style="left:1592.2px;top:49px;font-size:11.9px;color:#161616;letter-spacing:-0.4px;transform:translateX(-50%);-webkit-text-stroke:0.28px;">CPU</div>
<div class="t" style="left:1646.4px;top:49px;font-size:11.9px;color:#161616;letter-spacing:-0.4px;transform:translateX(-50%);-webkit-text-stroke:0.28px;">Mainboard</div>
<div class="t" style="left:1704.6px;top:48.1px;font-size:11.9px;color:#28288c;letter-spacing:-0.4px;transform:translateX(-50%);-webkit-text-stroke:0.28px;">Memory</div>
<div class="t" style="left:1752px;top:49px;font-size:11.9px;color:#161616;letter-spacing:-0.4px;transform:translateX(-50%);-webkit-text-stroke:0.28px;">SPD</div>
<div class="t" style="left:1801.8px;top:49px;font-size:11.9px;color:#161616;letter-spacing:-0.4px;transform:translateX(-50%);-webkit-text-stroke:0.28px;">Graphics</div>
<div class="t" style="left:1850.8px;top:49px;font-size:11.9px;color:#161616;letter-spacing:-0.4px;transform:translateX(-50%);-webkit-text-stroke:0.28px;">Bench</div>
<div class="t" style="left:1894.6px;top:49px;font-size:11.9px;color:#161616;letter-spacing:-0.4px;transform:translateX(-50%);-webkit-text-stroke:0.28px;">About</div>
<div class="b" style="left:1615.1px;top:46.2px;width:2px;height:18.8px;background:#6e6e6e;"></div>
<div class="b" style="left:1617.1px;top:46.2px;width:1.2px;height:18.8px;background:#fff;"></div>
<div class="b" style="left:1730.1px;top:46.2px;width:2px;height:18.8px;background:#6e6e6e;"></div>
<div class="b" style="left:1732.1px;top:46.2px;width:1.2px;height:18.8px;background:#fff;"></div>
<div class="b" style="left:1772.6px;top:46.2px;width:2px;height:18.8px;background:#6e6e6e;"></div>
<div class="b" style="left:1774.6px;top:46.2px;width:1.2px;height:18.8px;background:#fff;"></div>
<div class="b" style="left:1829.6px;top:46.2px;width:2px;height:18.8px;background:#6e6e6e;"></div>
<div class="b" style="left:1831.6px;top:46.2px;width:1.2px;height:18.8px;background:#fff;"></div>
<div class="b" style="left:1873.6px;top:46.2px;width:2px;height:18.8px;background:#6e6e6e;"></div>
<div class="b" style="left:1875.6px;top:46.2px;width:1.2px;height:18.8px;background:#fff;"></div>
<div class="b" style="left:1916.1px;top:46.2px;width:2px;height:18.8px;background:#6e6e6e;"></div>
<div class="b" style="left:1918.1px;top:46.2px;width:1.2px;height:18.8px;background:#fff;"></div>
<div class="b" style="left:1680.8px;top:63.4px;width:48.7px;height:3.6px;background:#f0f0f0;"></div>
<div class="t" style="left:1574.4px;top:407.38px;font-size:20.8px;color:#9a9a9a;letter-spacing:-0.31px;font-weight:bold;font-style:italic;-webkit-text-stroke:0.28px;">CPU-Z</div>
<div class="t" style="left:1649.6px;top:414.7px;font-size:11.9px;color:#222;letter-spacing:0.04px;-webkit-text-stroke:0.28px;">Ver. 2.17.0.x64</div>
<div class="b bt" style="left:1742px;top:405.8px;width:58px;height:20.4px;"></div>
<div class="t" style="left:1771px;top:410.7px;font-size:11.9px;color:#111;letter-spacing:-0.4px;transform:translateX(-50%);-webkit-text-stroke:0.28px;">Tools</div>
<div class="b bt" style="left:1800px;top:405.8px;width:16.8px;height:20.4px;"></div>
<svg class="b" style="left:1804.8px;top:413.2px;" width="7.20" height="4.40" viewBox="0 0 8 5"><path d="M0 0 H8 L4 5 Z" fill="#111"/></svg>
<div class="b bt" style="left:1822.8px;top:405.8px;width:76.4px;height:20.4px;"></div>
<div class="t" style="left:1861px;top:410.7px;font-size:11.9px;color:#111;letter-spacing:-0.4px;transform:translateX(-50%);-webkit-text-stroke:0.28px;">Validate</div>
<div class="b bt" style="left:1902.6px;top:405.8px;width:76.2px;height:20.4px;"></div>
<div class="t" style="left:1940.7px;top:410.7px;font-size:11.9px;color:#111;letter-spacing:-0.4px;transform:translateX(-50%);-webkit-text-stroke:0.28px;">Close</div>
<div class="b gb" style="left:1574px;top:73.6px;width:387px;height:70.4px;"></div>
<div class="b" style="left:1579.2px;top:67.6px;width:44.34px;height:12px;background:#f0f0f0;"></div>
<div class="t" style="left:1581.2px;top:68.1px;font-size:11.9px;color:#161616;letter-spacing:-0.4px;-webkit-text-stroke:0.28px;">General</div>
<div class="t" style="left:1611.6px;top:85.9px;font-size:11.9px;color:#161616;letter-spacing:-0.4px;transform:translateX(-100%);-webkit-text-stroke:0.28px;">Type</div>
<div class="b vb" style="left:1625.8px;top:82.9px;width:103.2px;height:16.6px;"></div>
<div class="t" style="left:1677.4px;top:85.9px;font-size:11.9px;color:#28288c;letter-spacing:-0.4px;transform:translateX(-50%);-webkit-text-stroke:0.28px;">DDR3</div>
<div class="t" style="left:1844.4px;top:85.9px;font-size:11.9px;color:#161616;letter-spacing:-0.4px;transform:translateX(-100%);-webkit-text-stroke:0.28px;">Channel #</div>
<div class="b vb" style="left:1851.6px;top:82.9px;width:103.2px;height:16.6px;"></div>
<div class="t" style="left:1903.2px;top:85.9px;font-size:11.9px;color:#28288c;letter-spacing:-0.4px;transform:translateX(-50%);-webkit-text-stroke:0.28px;">Dual</div>
<div class="t" style="left:1611.6px;top:104.7px;font-size:11.9px;color:#161616;letter-spacing:-0.4px;transform:translateX(-100%);-webkit-text-stroke:0.28px;">Size</div>
<div class="b vb" style="left:1625.8px;top:101.7px;width:103.2px;height:16.6px;"></div>
<div class="t" style="left:1677.4px;top:104.7px;font-size:11.9px;color:#28288c;letter-spacing:-0.4px;transform:translateX(-50%);-webkit-text-stroke:0.28px;">8 GBytes</div>
<div class="t" style="left:1844.4px;top:104.7px;font-size:11.9px;color:#a4a4a4;letter-spacing:-0.4px;transform:translateX(-100%);-webkit-text-stroke:0.28px;">DC Mode</div>
<div class="b vb" style="left:1851.6px;top:101.7px;width:103.2px;height:16.6px;"></div>
<div class="t" style="left:1844.4px;top:122.9px;font-size:11.9px;color:#a4a4a4;letter-spacing:-0.4px;transform:translateX(-100%);-webkit-text-stroke:0.28px;">Uncore Frequency</div>
<div class="b vb" style="left:1851.6px;top:119.9px;width:103.2px;height:16.6px;"></div>
<div class="b gb" style="left:1574px;top:155.6px;width:305.4px;height:221.2px;"></div>
<div class="b" style="left:1579.2px;top:149.6px;width:43.22px;height:12px;background:#f0f0f0;"></div>
<div class="t" style="left:1581.2px;top:150.1px;font-size:11.9px;color:#161616;letter-spacing:-0.4px;-webkit-text-stroke:0.28px;">Timings</div>
<div class="t" style="left:1756.8px;top:167.7px;font-size:11.9px;color:#161616;letter-spacing:-0.4px;transform:translateX(-100%);-webkit-text-stroke:0.28px;">DRAM Frequency</div>
<div class="b vb" style="left:1768.8px;top:164.7px;width:87.6px;height:16.6px;"></div>
<div class="t" style="left:1812.6px;top:167.7px;font-size:11.9px;color:#28288c;letter-spacing:-0.4px;transform:translateX(-50%);-webkit-text-stroke:0.28px;">665.1 MHz</div>
<div class="t" style="left:1756.8px;top:186.24px;font-size:11.9px;color:#161616;letter-spacing:-0.4px;transform:translateX(-100%);-webkit-text-stroke:0.28px;">FSB:DRAM</div>
<div class="b vb" style="left:1768.8px;top:183.24px;width:87.6px;height:16.6px;"></div>
<div class="t" style="left:1812.6px;top:186.24px;font-size:11.9px;color:#28288c;letter-spacing:-0.4px;transform:translateX(-50%);-webkit-text-stroke:0.28px;">1:5</div>
<div class="t" style="left:1756.8px;top:204.78px;font-size:11.9px;color:#161616;letter-spacing:-0.4px;transform:translateX(-100%);-webkit-text-stroke:0.28px;">CAS# Latency (CL)</div>
<div class="b vb" style="left:1768.8px;top:201.78px;width:87.6px;height:16.6px;"></div>
<div class="t" style="left:1812.6px;top:204.78px;font-size:11.9px;color:#28288c;letter-spacing:-0.4px;transform:translateX(-50%);-webkit-text-stroke:0.28px;">9.0 clocks</div>
<div class="t" style="left:1756.8px;top:223.32px;font-size:11.9px;color:#161616;letter-spacing:-0.4px;transform:translateX(-100%);-webkit-text-stroke:0.28px;">RAS# to CAS# Delay (tRCD)</div>
<div class="b vb" style="left:1768.8px;top:220.32px;width:87.6px;height:16.6px;"></div>
<div class="t" style="left:1812.6px;top:223.32px;font-size:11.9px;color:#28288c;letter-spacing:-0.4px;transform:translateX(-50%);-webkit-text-stroke:0.28px;">9 clocks</div>
<div class="t" style="left:1756.8px;top:241.86px;font-size:11.9px;color:#161616;letter-spacing:-0.4px;transform:translateX(-100%);-webkit-text-stroke:0.28px;">RAS# Precharge (tRP)</div>
<div class="b vb" style="left:1768.8px;top:238.86px;width:87.6px;height:16.6px;"></div>
<div class="t" style="left:1812.6px;top:241.86px;font-size:11.9px;color:#28288c;letter-spacing:-0.4px;transform:translateX(-50%);-webkit-text-stroke:0.28px;">9 clocks</div>
<div class="t" style="left:1756.8px;top:260.4px;font-size:11.9px;color:#161616;letter-spacing:-0.4px;transform:translateX(-100%);-webkit-text-stroke:0.28px;">Cycle Time (tRAS)</div>
<div class="b vb" style="left:1768.8px;top:257.4px;width:87.6px;height:16.6px;"></div>
<div class="t" style="left:1812.6px;top:260.4px;font-size:11.9px;color:#28288c;letter-spacing:-0.4px;transform:translateX(-50%);-webkit-text-stroke:0.28px;">24 clocks</div>
<div class="t" style="left:1756.8px;top:278.94px;font-size:11.9px;color:#161616;letter-spacing:-0.4px;transform:translateX(-100%);-webkit-text-stroke:0.28px;">Row Refresh Cycle Time (tRFC)</div>
<div class="b vb" style="left:1768.8px;top:275.94px;width:87.6px;height:16.6px;"></div>
<div class="t" style="left:1812.6px;top:278.94px;font-size:11.9px;color:#28288c;letter-spacing:-0.4px;transform:translateX(-50%);-webkit-text-stroke:0.28px;">107 clocks</div>
<div class="t" style="left:1756.8px;top:297.48px;font-size:11.9px;color:#161616;letter-spacing:-0.4px;transform:translateX(-100%);-webkit-text-stroke:0.28px;">Command Rate (CR)</div>
<div class="b vb" style="left:1768.8px;top:294.48px;width:87.6px;height:16.6px;"></div>
<div class="t" style="left:1812.6px;top:297.48px;font-size:11.9px;color:#28288c;letter-spacing:-0.4px;transform:translateX(-50%);-webkit-text-stroke:0.28px;">1T</div>
<div class="t" style="left:1756.8px;top:316.02px;font-size:11.9px;color:#a4a4a4;letter-spacing:-0.4px;transform:translateX(-100%);-webkit-text-stroke:0.28px;">DRAM Idle Timer</div>
<div class="b vb" style="left:1768.8px;top:313.02px;width:87.6px;height:16.6px;"></div>
<div class="t" style="left:1756.8px;top:334.56px;font-size:11.9px;color:#a4a4a4;letter-spacing:-0.4px;transform:translateX(-100%);-webkit-text-stroke:0.28px;">Total CAS# (tRDRAM)</div>
<div class="b vb" style="left:1768.8px;top:331.56px;width:87.6px;height:16.6px;"></div>
<div class="t" style="left:1756.8px;top:353.1px;font-size:11.9px;color:#a4a4a4;letter-spacing:-0.4px;transform:translateX(-100%);-webkit-text-stroke:0.28px;">Row To Column (tRCD)</div>
<div class="b vb" style="left:1768.8px;top:350.1px;width:87.6px;height:16.6px;"></div>
<div class="b" style="left:1140px;top:443.5px;width:417.6px;height:416.6px;background:#f0f0f0;box-shadow:0 0 0 1.4px rgba(120,120,130,.85),0 2px 8px rgba(0,0,0,.4);"></div>
<div class="b" style="left:1140px;top:443.5px;width:417.6px;height:28px;background:#fff;"></div>
<svg class="b" style="left:1143.2px;top:447.7px;" width="16.40" height="16.40" viewBox="0 0 16 16"><rect x="0" y="0" width="16" height="16" rx="1" fill="#3a1a78"/><rect x="3.2" y="3.2" width="9.6" height="9.6" rx="1.4" fill="none" stroke="#d8c8f4" stroke-width="1.7"/><rect x="6" y="6" width="4" height="4" fill="#b090e8"/><path d="M8 0.8 V3 M8 13 V15.2 M0.8 8 H3 M13 8 H15.2" stroke="#d8c8f4" stroke-width="1.4"/></svg>
<div class="t" style="left:1165.5px;top:450.44px;font-size:12.2px;color:#8f8f8f;letter-spacing:-0.254px;-webkit-text-stroke:0.28px;">CPU-Z</div>
<div class="b" style="left:1434px;top:456.7px;width:10px;height:1.2px;background:#9a9a9a;"></div>
<div class="b" style="left:1482px;top:451.9px;width:10px;height:10px;border:1.2px solid #e2e2e2;box-sizing:border-box;"></div>
<svg class="b" style="left:1528.8px;top:451.1px;" width="10.80" height="10.80" viewBox="0 0 10 10"><path d="M0.5 0.5 L9.5 9.5 M9.5 0.5 L0.5 9.5" stroke="#9a9a9a" stroke-width="1.1"/></svg>
<div class="b" style="left:1144.8px;top:494.7px;width:408.8px;height:334.8px;border:2px solid #fdfdfd;border-right-color:#c8c8c8;border-bottom-color:#c8c8c8;box-sizing:border-box;background:#f0f0f0;"></div>
<div class="t" style="left:1166.6px;top:479.1px;font-size:11.9px;color:#161616;letter-spacing:-0.4px;transform:translateX(-50%);-webkit-text-stroke:0.28px;">CPU</div>
<div class="t" style="left:1220.8px;top:479.1px;font-size:11.9px;color:#161616;letter-spacing:-0.4px;transform:translateX(-50%);-webkit-text-stroke:0.28px;">Mainboard</div>
<div class="t" style="left:1279px;top:479.1px;font-size:11.9px;color:#161616;letter-spacing:-0.4px;transform:translateX(-50%);-webkit-text-stroke:0.28px;">Memory</div>
<div class="t" style="left:1326.4px;top:478.2px;font-size:11.9px;color:#28288c;letter-spacing:-0.4px;transform:translateX(-50%);-webkit-text-stroke:0.28px;">SPD</div>
<div class="t" style="left:1376.2px;top:479.1px;font-size:11.9px;color:#161616;letter-spacing:-0.4px;transform:translateX(-50%);-webkit-text-stroke:0.28px;">Graphics</div>
<div class="t" style="left:1425.2px;top:479.1px;font-size:11.9px;color:#161616;letter-spacing:-0.4px;transform:translateX(-50%);-webkit-text-stroke:0.28px;">Bench</div>
<div class="t" style="left:1469px;top:479.1px;font-size:11.9px;color:#161616;letter-spacing:-0.4px;transform:translateX(-50%);-webkit-text-stroke:0.28px;">About</div>
<div class="b" style="left:1189.5px;top:476.3px;width:2px;height:18.8px;background:#6e6e6e;"></div>
<div class="b" style="left:1191.5px;top:476.3px;width:1.2px;height:18.8px;background:#fff;"></div>
<div class="b" style="left:1253px;top:476.3px;width:2px;height:18.8px;background:#6e6e6e;"></div>
<div class="b" style="left:1255px;top:476.3px;width:1.2px;height:18.8px;background:#fff;"></div>
<div class="b" style="left:1347px;top:476.3px;width:2px;height:18.8px;background:#6e6e6e;"></div>
<div class="b" style="left:1349px;top:476.3px;width:1.2px;height:18.8px;background:#fff;"></div>
<div class="b" style="left:1404px;top:476.3px;width:2px;height:18.8px;background:#6e6e6e;"></div>
<div class="b" style="left:1406px;top:476.3px;width:1.2px;height:18.8px;background:#fff;"></div>
<div class="b" style="left:1448px;top:476.3px;width:2px;height:18.8px;background:#6e6e6e;"></div>
<div class="b" style="left:1450px;top:476.3px;width:1.2px;height:18.8px;background:#fff;"></div>
<div class="b" style="left:1490.5px;top:476.3px;width:2px;height:18.8px;background:#6e6e6e;"></div>
<div class="b" style="left:1492.5px;top:476.3px;width:1.2px;height:18.8px;background:#fff;"></div>
<div class="b" style="left:1306.7px;top:493.5px;width:39.7px;height:3.6px;background:#f0f0f0;"></div>
<div class="t" style="left:1148.8px;top:837.48px;font-size:20.8px;color:#9a9a9a;letter-spacing:-0.31px;font-weight:bold;font-style:italic;-webkit-text-stroke:0.28px;">CPU-Z</div>
<div class="t" style="left:1224px;top:844.8px;font-size:11.9px;color:#222;letter-spacing:0.04px;-webkit-text-stroke:0.28px;">Ver. 2.17.0.x64</div>
<div class="b bt" style="left:1316.4px;top:835.9px;width:58px;height:20.4px;"></div>
<div class="t" style="left:1345.4px;top:840.8px;font-size:11.9px;color:#111;letter-spacing:-0.4px;transform:translateX(-50%);-webkit-text-stroke:0.28px;">Tools</div>
<div class="b bt" style="left:1374.4px;top:835.9px;width:16.8px;height:20.4px;"></div>
<svg class="b" style="left:1379.2px;top:843.3px;" width="7.20" height="4.40" viewBox="0 0 8 5"><path d="M0 0 H8 L4 5 Z" fill="#111"/></svg>
<div class="b bt" style="left:1397.2px;top:835.9px;width:76.4px;height:20.4px;"></div>
<div class="t" style="left:1435.4px;top:840.8px;font-size:11.9px;color:#111;letter-spacing:-0.4px;transform:translateX(-50%);-webkit-text-stroke:0.28px;">Validate</div>
<div class="b bt" style="left:1477px;top:835.9px;width:76.2px;height:20.4px;"></div>
<div class="t" style="left:1515.1px;top:840.8px;font-size:11.9px;color:#111;letter-spacing:-0.4px;transform:translateX(-50%);-webkit-text-stroke:0.28px;">Close</div>
<div class="b gb" style="left:1151px;top:503.5px;width:399px;height:131.5px;"></div>
<div class="b" style="left:1156.2px;top:497.5px;width:115.44px;height:12px;background:#f0f0f0;"></div>
<div class="t" style="left:1158.2px;top:498px;font-size:11.9px;color:#161616;letter-spacing:-0.4px;-webkit-text-stroke:0.28px;">Memory Slot Selection</div>
<div class="b" style="left:1156.5px;top:517.1px;width:86px;height:18.8px;background:#fff;border:2px solid #8c8c8c;box-sizing:border-box;border-right-color:#e8e8e8;border-bottom-color:#e8e8e8;"></div>
<div class="t" style="left:1159.7px;top:521.2px;font-size:11.9px;color:#28288c;letter-spacing:-0.4px;-webkit-text-stroke:0.28px;">Slot #1</div>
<div class="b" style="left:1224.5px;top:519.1px;width:16.4px;height:14.8px;background:#ececec;border:2px solid #fafafa;border-right-color:#7a7a7a;border-bottom-color:#7a7a7a;box-sizing:border-box;"></div>
<svg class="b" style="left:1228.7px;top:524.7px;" width="7.20" height="4.40" viewBox="0 0 8 5"><path d="M0 0 H8 L4 5 Z" fill="#111"/></svg>
<div class="b vb" style="left:1251.5px;top:518.2px;width:132px;height:16.6px;"></div>
<div class="t" style="left:1254.7px;top:521.2px;font-size:11.9px;color:#28288c;letter-spacing:-0.4px;-webkit-text-stroke:0.28px;">DDR3 (UDIMM)</div>
<div class="t" style="left:1450.4px;top:522.2px;font-size:11.9px;color:#161616;letter-spacing:-0.4px;transform:translateX(-100%);-webkit-text-stroke:0.28px;">Module Size</div>
<div class="b vb" style="left:1459px;top:518.2px;width:86px;height:16.6px;"></div>
<div class="t" style="left:1502px;top:521.2px;font-size:11.9px;color:#28288c;letter-spacing:-0.4px;transform:translateX(-50%);-webkit-text-stroke:0.28px;">4 GBytes</div>
<div class="t" style="left:1241.9px;top:541.2px;font-size:11.9px;color:#161616;letter-spacing:-0.4px;transform:translateX(-100%);-webkit-text-stroke:0.28px;">Max Bandwidth</div>
<div class="b vb" style="left:1251.5px;top:538.2px;width:132px;height:16.6px;"></div>
<div class="t" style="left:1317.5px;top:541.2px;font-size:11.9px;color:#28288c;letter-spacing:-0.4px;transform:translateX(-50%);-webkit-text-stroke:0.28px;">PC3-10700 (667 MHz)</div>
<div class="t" style="left:1450.4px;top:541.2px;font-size:11.9px;color:#a4a4a4;letter-spacing:-0.4px;transform:translateX(-100%);-webkit-text-stroke:0.28px;">SPD Ext.</div>
<div class="b vb" style="left:1459px;top:538.2px;width:86px;height:16.6px;"></div>
<div class="t" style="left:1241.9px;top:560.2px;font-size:11.9px;color:#161616;letter-spacing:-0.4px;transform:translateX(-100%);-webkit-text-stroke:0.28px;">Module Manuf.</div>
<div class="b vb" style="left:1251.5px;top:557.2px;width:132px;height:16.6px;"></div>
<div class="t" style="left:1317.5px;top:560.2px;font-size:11.9px;color:#28288c;letter-spacing:-0.4px;transform:translateX(-50%);-webkit-text-stroke:0.28px;">Kingston</div>
<div class="t" style="left:1450.4px;top:560.2px;font-size:11.9px;color:#161616;letter-spacing:-0.4px;transform:translateX(-100%);-webkit-text-stroke:0.28px;">Week/Year</div>
<div class="b vb" style="left:1459px;top:557.2px;width:86px;height:16.6px;"></div>
<div class="t" style="left:1502px;top:560.2px;font-size:11.9px;color:#28288c;letter-spacing:-0.4px;transform:translateX(-50%);-webkit-text-stroke:0.28px;">51 / 11</div>
<div class="t" style="left:1241.9px;top:578.7px;font-size:11.9px;color:#a4a4a4;letter-spacing:-0.4px;transform:translateX(-100%);-webkit-text-stroke:0.28px;">DRAM Manuf.</div>
<div class="b vb" style="left:1251.5px;top:575.7px;width:132px;height:16.6px;"></div>
<div class="t" style="left:1450.4px;top:578.7px;font-size:11.9px;color:#161616;letter-spacing:-0.4px;transform:translateX(-100%);-webkit-text-stroke:0.28px;">Ranks</div>
<div class="b vb" style="left:1459px;top:575.7px;width:86px;height:16.6px;"></div>
<div class="t" style="left:1502px;top:578.7px;font-size:11.9px;color:#28288c;letter-spacing:-0.4px;transform:translateX(-50%);-webkit-text-stroke:0.28px;">Dual</div>
<div class="t" style="left:1241.9px;top:597.7px;font-size:11.9px;color:#161616;letter-spacing:-0.4px;transform:translateX(-100%);-webkit-text-stroke:0.28px;">Part Number</div>
<div class="b vb" style="left:1251.5px;top:594.7px;width:132px;height:16.6px;"></div>
<div class="t" style="left:1317.5px;top:597.7px;font-size:11.9px;color:#28288c;letter-spacing:-0.4px;transform:translateX(-50%);-webkit-text-stroke:0.28px;">99U5471-020.A00LF</div>
<div class="t" style="left:1450.4px;top:597.7px;font-size:11.9px;color:#a4a4a4;letter-spacing:-0.4px;transform:translateX(-100%);-webkit-text-stroke:0.28px;">Correction</div>
<div class="b vb" style="left:1459px;top:594.7px;width:86px;height:16.6px;"></div>
<div class="t" style="left:1241.9px;top:616.2px;font-size:11.9px;color:#161616;letter-spacing:-0.4px;transform:translateX(-100%);-webkit-text-stroke:0.28px;">Serial Number</div>
<div class="b vb" style="left:1251.5px;top:613.2px;width:132px;height:16.6px;"></div>
<div class="t" style="left:1317.5px;top:616.2px;font-size:11.9px;color:#28288c;letter-spacing:-0.4px;transform:translateX(-50%);-webkit-text-stroke:0.28px;">5D2C9961</div>
<div class="t" style="left:1450.4px;top:616.2px;font-size:11.9px;color:#a4a4a4;letter-spacing:-0.4px;transform:translateX(-100%);-webkit-text-stroke:0.28px;">Registered</div>
<div class="b vb" style="left:1459px;top:613.2px;width:86px;height:16.6px;"></div>
<div class="b gb" style="left:1151px;top:645px;width:399px;height:169.8px;"></div>
<div class="b" style="left:1156.2px;top:639px;width:72.34px;height:12px;background:#f0f0f0;"></div>
<div class="t" style="left:1158.2px;top:639.5px;font-size:11.9px;color:#161616;letter-spacing:-0.4px;-webkit-text-stroke:0.28px;">Timings Table</div>
<div class="t" style="left:1284.5px;top:649.4px;font-size:11.9px;color:#161616;letter-spacing:-0.4px;transform:translateX(-50%);-webkit-text-stroke:0.28px;">JEDEC #1</div>
<div class="t" style="left:1351.76px;top:649.4px;font-size:11.9px;color:#161616;letter-spacing:-0.4px;transform:translateX(-50%);-webkit-text-stroke:0.28px;">JEDEC #2</div>
<div class="t" style="left:1418.24px;top:649.4px;font-size:11.9px;color:#161616;letter-spacing:-0.4px;transform:translateX(-50%);-webkit-text-stroke:0.28px;">JEDEC #3</div>
<div class="t" style="left:1485.5px;top:649.4px;font-size:11.9px;color:#161616;letter-spacing:-0.4px;transform:translateX(-50%);-webkit-text-stroke:0.28px;">JEDEC #4</div>
<div class="t" style="left:1241.9px;top:667.2px;font-size:11.9px;color:#161616;letter-spacing:-0.4px;transform:translateX(-100%);-webkit-text-stroke:0.28px;">Frequency</div>
<div class="b vb" style="left:1252.5px;top:664.2px;width:64px;height:16.6px;"></div>
<div class="t" style="left:1284.5px;top:667.2px;font-size:11.9px;color:#28288c;letter-spacing:-0.4px;transform:translateX(-50%);-webkit-text-stroke:0.28px;">457 MHz</div>
<div class="b vb" style="left:1320px;top:664.2px;width:63.5px;height:16.6px;"></div>
<div class="t" style="left:1351.76px;top:667.2px;font-size:11.9px;color:#28288c;letter-spacing:-0.4px;transform:translateX(-50%);-webkit-text-stroke:0.28px;">533 MHz</div>
<div class="b vb" style="left:1386.5px;top:664.2px;width:63.5px;height:16.6px;"></div>
<div class="t" style="left:1418.24px;top:667.2px;font-size:11.9px;color:#28288c;letter-spacing:-0.4px;transform:translateX(-50%);-webkit-text-stroke:0.28px;">609 MHz</div>
<div class="b vb" style="left:1453.5px;top:664.2px;width:64px;height:16.6px;"></div>
<div class="t" style="left:1485.5px;top:667.2px;font-size:11.9px;color:#28288c;letter-spacing:-0.4px;transform:translateX(-50%);-webkit-text-stroke:0.28px;">666 MHz</div>
<div class="t" style="left:1241.9px;top:685.7px;font-size:11.9px;color:#161616;letter-spacing:-0.4px;transform:translateX(-100%);-webkit-text-stroke:0.28px;">CAS# Latency</div>
<div class="b vb" style="left:1252.5px;top:682.7px;width:64px;height:16.6px;"></div>
<div class="t" style="left:1284.5px;top:685.7px;font-size:11.9px;color:#28288c;letter-spacing:-0.4px;transform:translateX(-50%);-webkit-text-stroke:0.28px;">6.0</div>
<div class="b vb" style="left:1320px;top:682.7px;width:63.5px;height:16.6px;"></div>
<div class="t" style="left:1351.76px;top:685.7px;font-size:11.9px;color:#28288c;letter-spacing:-0.4px;transform:translateX(-50%);-webkit-text-stroke:0.28px;">7.0</div>
<div class="b vb" style="left:1386.5px;top:682.7px;width:63.5px;height:16.6px;"></div>
<div class="t" style="left:1418.24px;top:685.7px;font-size:11.9px;color:#28288c;letter-spacing:-0.4px;transform:translateX(-50%);-webkit-text-stroke:0.28px;">8.0</div>
<div class="b vb" style="left:1453.5px;top:682.7px;width:64px;height:16.6px;"></div>
<div class="t" style="left:1485.5px;top:685.7px;font-size:11.9px;color:#28288c;letter-spacing:-0.4px;transform:translateX(-50%);-webkit-text-stroke:0.28px;">9.0</div>
<div class="t" style="left:1241.9px;top:704.2px;font-size:11.9px;color:#161616;letter-spacing:-0.4px;transform:translateX(-100%);-webkit-text-stroke:0.28px;">RAS# to CAS#</div>
<div class="b vb" style="left:1252.5px;top:701.2px;width:64px;height:16.6px;"></div>
<div class="t" style="left:1284.5px;top:704.2px;font-size:11.9px;color:#28288c;letter-spacing:-0.4px;transform:translateX(-50%);-webkit-text-stroke:0.28px;">6</div>
<div class="b vb" style="left:1320px;top:701.2px;width:63.5px;height:16.6px;"></div>
<div class="t" style="left:1351.76px;top:704.2px;font-size:11.9px;color:#28288c;letter-spacing:-0.4px;transform:translateX(-50%);-webkit-text-stroke:0.28px;">7</div>
<div class="b vb" style="left:1386.5px;top:701.2px;width:63.5px;height:16.6px;"></div>
<div class="t" style="left:1418.24px;top:704.2px;font-size:11.9px;color:#28288c;letter-spacing:-0.4px;transform:translateX(-50%);-webkit-text-stroke:0.28px;">8</div>
<div class="b vb" style="left:1453.5px;top:701.2px;width:64px;height:16.6px;"></div>
<div class="t" style="left:1485.5px;top:704.2px;font-size:11.9px;color:#28288c;letter-spacing:-0.4px;transform:translateX(-50%);-webkit-text-stroke:0.28px;">9</div>
<div class="t" style="left:1241.9px;top:722.7px;font-size:11.9px;color:#161616;letter-spacing:-0.4px;transform:translateX(-100%);-webkit-text-stroke:0.28px;">RAS# Precharge</div>
<div class="b vb" style="left:1252.5px;top:719.7px;width:64px;height:16.6px;"></div>
<div class="t" style="left:1284.5px;top:722.7px;font-size:11.9px;color:#28288c;letter-spacing:-0.4px;transform:translateX(-50%);-webkit-text-stroke:0.28px;">6</div>
<div class="b vb" style="left:1320px;top:719.7px;width:63.5px;height:16.6px;"></div>
<div class="t" style="left:1351.76px;top:722.7px;font-size:11.9px;color:#28288c;letter-spacing:-0.4px;transform:translateX(-50%);-webkit-text-stroke:0.28px;">7</div>
<div class="b vb" style="left:1386.5px;top:719.7px;width:63.5px;height:16.6px;"></div>
<div class="t" style="left:1418.24px;top:722.7px;font-size:11.9px;color:#28288c;letter-spacing:-0.4px;transform:translateX(-50%);-webkit-text-stroke:0.28px;">8</div>
<div class="b vb" style="left:1453.5px;top:719.7px;width:64px;height:16.6px;"></div>
<div class="t" style="left:1485.5px;top:722.7px;font-size:11.9px;color:#28288c;letter-spacing:-0.4px;transform:translateX(-50%);-webkit-text-stroke:0.28px;">9</div>
<div class="t" style="left:1241.9px;top:741.2px;font-size:11.9px;color:#161616;letter-spacing:-0.4px;transform:translateX(-100%);-webkit-text-stroke:0.28px;">tRAS</div>
<div class="b vb" style="left:1252.5px;top:738.2px;width:64px;height:16.6px;"></div>
<div class="t" style="left:1284.5px;top:741.2px;font-size:11.9px;color:#28288c;letter-spacing:-0.4px;transform:translateX(-50%);-webkit-text-stroke:0.28px;">17</div>
<div class="b vb" style="left:1320px;top:738.2px;width:63.5px;height:16.6px;"></div>
<div class="t" style="left:1351.76px;top:741.2px;font-size:11.9px;color:#28288c;letter-spacing:-0.4px;transform:translateX(-50%);-webkit-text-stroke:0.28px;">20</div>
<div class="b vb" style="left:1386.5px;top:738.2px;width:63.5px;height:16.6px;"></div>
<div class="t" style="left:1418.24px;top:741.2px;font-size:11.9px;color:#28288c;letter-spacing:-0.4px;transform:translateX(-50%);-webkit-text-stroke:0.28px;">22</div>
<div class="b vb" style="left:1453.5px;top:738.2px;width:64px;height:16.6px;"></div>
<div class="t" style="left:1485.5px;top:741.2px;font-size:11.9px;color:#28288c;letter-spacing:-0.4px;transform:translateX(-50%);-webkit-text-stroke:0.28px;">24</div>
<div class="t" style="left:1241.9px;top:759.7px;font-size:11.9px;color:#161616;letter-spacing:-0.4px;transform:translateX(-100%);-webkit-text-stroke:0.28px;">tRC</div>
<div class="b vb" style="left:1252.5px;top:756.7px;width:64px;height:16.6px;"></div>
<div class="t" style="left:1284.5px;top:759.7px;font-size:11.9px;color:#28288c;letter-spacing:-0.4px;transform:translateX(-50%);-webkit-text-stroke:0.28px;">23</div>
<div class="b vb" style="left:1320px;top:756.7px;width:63.5px;height:16.6px;"></div>
<div class="t" style="left:1351.76px;top:759.7px;font-size:11.9px;color:#28288c;letter-spacing:-0.4px;transform:translateX(-50%);-webkit-text-stroke:0.28px;">27</div>
<div class="b vb" style="left:1386.5px;top:756.7px;width:63.5px;height:16.6px;"></div>
<div class="t" style="left:1418.24px;top:759.7px;font-size:11.9px;color:#28288c;letter-spacing:-0.4px;transform:translateX(-50%);-webkit-text-stroke:0.28px;">30</div>
<div class="b vb" style="left:1453.5px;top:756.7px;width:64px;height:16.6px;"></div>
<div class="t" style="left:1485.5px;top:759.7px;font-size:11.9px;color:#28288c;letter-spacing:-0.4px;transform:translateX(-50%);-webkit-text-stroke:0.28px;">33</div>
<div class="t" style="left:1241.9px;top:778.2px;font-size:11.9px;color:#a4a4a4;letter-spacing:-0.4px;transform:translateX(-100%);-webkit-text-stroke:0.28px;">Command Rate</div>
<div class="b vb" style="left:1252.5px;top:775.2px;width:64px;height:16.6px;"></div>
<div class="b vb" style="left:1320px;top:775.2px;width:63.5px;height:16.6px;"></div>
<div class="b vb" style="left:1386.5px;top:775.2px;width:63.5px;height:16.6px;"></div>
<div class="b vb" style="left:1453.5px;top:775.2px;width:64px;height:16.6px;"></div>
<div class="t" style="left:1241.9px;top:796.7px;font-size:11.9px;color:#161616;letter-spacing:-0.4px;transform:translateX(-100%);-webkit-text-stroke:0.28px;">Voltage</div>
<div class="b vb" style="left:1252.5px;top:793.7px;width:64px;height:16.6px;"></div>
<div class="t" style="left:1284.5px;top:796.7px;font-size:11.9px;color:#28288c;letter-spacing:-0.4px;transform:translateX(-50%);-webkit-text-stroke:0.28px;">1.50 V</div>
<div class="b vb" style="left:1320px;top:793.7px;width:63.5px;height:16.6px;"></div>
<div class="t" style="left:1351.76px;top:796.7px;font-size:11.9px;color:#28288c;letter-spacing:-0.4px;transform:translateX(-50%);-webkit-text-stroke:0.28px;">1.50 V</div>
<div class="b vb" style="left:1386.5px;top:793.7px;width:63.5px;height:16.6px;"></div>
<div class="t" style="left:1418.24px;top:796.7px;font-size:11.9px;color:#28288c;letter-spacing:-0.4px;transform:translateX(-50%);-webkit-text-stroke:0.28px;">1.50 V</div>
<div class="b vb" style="left:1453.5px;top:793.7px;width:64px;height:16.6px;"></div>
<div class="t" style="left:1485.5px;top:796.7px;font-size:11.9px;color:#28288c;letter-spacing:-0.4px;transform:translateX(-50%);-webkit-text-stroke:0.28px;">1.50 V</div>
<div class="b" style="left:1568px;top:440.6px;width:417.6px;height:416.6px;background:#f0f0f0;box-shadow:0 0 0 1.4px rgba(120,120,130,.85),0 2px 8px rgba(0,0,0,.4);"></div>
<div class="b" style="left:1568px;top:440.6px;width:417.6px;height:28px;background:#fff;"></div>
<svg class="b" style="left:1571.2px;top:444.8px;" width="16.40" height="16.40" viewBox="0 0 16 16"><rect x="0" y="0" width="16" height="16" rx="1" fill="#3a1a78"/><rect x="3.2" y="3.2" width="9.6" height="9.6" rx="1.4" fill="none" stroke="#d8c8f4" stroke-width="1.7"/><rect x="6" y="6" width="4" height="4" fill="#b090e8"/><path d="M8 0.8 V3 M8 13 V15.2 M0.8 8 H3 M13 8 H15.2" stroke="#d8c8f4" stroke-width="1.4"/></svg>
<div class="t" style="left:1593.5px;top:447.54px;font-size:12.2px;color:#8f8f8f;letter-spacing:-0.254px;-webkit-text-stroke:0.28px;">CPU-Z</div>
<div class="b" style="left:1862px;top:453.8px;width:10px;height:1.2px;background:#9a9a9a;"></div>
<div class="b" style="left:1910px;top:449px;width:10px;height:10px;border:1.2px solid #e2e2e2;box-sizing:border-box;"></div>
<svg class="b" style="left:1956.8px;top:448.2px;" width="10.80" height="10.80" viewBox="0 0 10 10"><path d="M0.5 0.5 L9.5 9.5 M9.5 0.5 L0.5 9.5" stroke="#9a9a9a" stroke-width="1.1"/></svg>
<div class="b" style="left:1572.8px;top:491.8px;width:408.8px;height:334.8px;border:2px solid #fdfdfd;border-right-color:#c8c8c8;border-bottom-color:#c8c8c8;box-sizing:border-box;background:#f0f0f0;"></div>
<div class="t" style="left:1594.6px;top:476.2px;font-size:11.9px;color:#161616;letter-spacing:-0.4px;transform:translateX(-50%);-webkit-text-stroke:0.28px;">CPU</div>
<div class="t" style="left:1648.8px;top:476.2px;font-size:11.9px;color:#161616;letter-spacing:-0.4px;transform:translateX(-50%);-webkit-text-stroke:0.28px;">Mainboard</div>
<div class="t" style="left:1707px;top:476.2px;font-size:11.9px;color:#161616;letter-spacing:-0.4px;transform:translateX(-50%);-webkit-text-stroke:0.28px;">Memory</div>
<div class="t" style="left:1754.4px;top:476.2px;font-size:11.9px;color:#161616;letter-spacing:-0.4px;transform:translateX(-50%);-webkit-text-stroke:0.28px;">SPD</div>
<div class="t" style="left:1804.2px;top:475.3px;font-size:11.9px;color:#28288c;letter-spacing:-0.4px;transform:translateX(-50%);-webkit-text-stroke:0.28px;">Graphics</div>
<div class="t" style="left:1853.2px;top:476.2px;font-size:11.9px;color:#161616;letter-spacing:-0.4px;transform:translateX(-50%);-webkit-text-stroke:0.28px;">Bench</div>
<div class="t" style="left:1897px;top:476.2px;font-size:11.9px;color:#161616;letter-spacing:-0.4px;transform:translateX(-50%);-webkit-text-stroke:0.28px;">About</div>
<div class="b" style="left:1617.5px;top:473.4px;width:2px;height:18.8px;background:#6e6e6e;"></div>
<div class="b" style="left:1619.5px;top:473.4px;width:1.2px;height:18.8px;background:#fff;"></div>
<div class="b" style="left:1681px;top:473.4px;width:2px;height:18.8px;background:#6e6e6e;"></div>
<div class="b" style="left:1683px;top:473.4px;width:1.2px;height:18.8px;background:#fff;"></div>
<div class="b" style="left:1732.5px;top:473.4px;width:2px;height:18.8px;background:#6e6e6e;"></div>
<div class="b" style="left:1734.5px;top:473.4px;width:1.2px;height:18.8px;background:#fff;"></div>
<div class="b" style="left:1832px;top:473.4px;width:2px;height:18.8px;background:#6e6e6e;"></div>
<div class="b" style="left:1834px;top:473.4px;width:1.2px;height:18.8px;background:#fff;"></div>
<div class="b" style="left:1876px;top:473.4px;width:2px;height:18.8px;background:#6e6e6e;"></div>
<div class="b" style="left:1878px;top:473.4px;width:1.2px;height:18.8px;background:#fff;"></div>
<div class="b" style="left:1918.5px;top:473.4px;width:2px;height:18.8px;background:#6e6e6e;"></div>
<div class="b" style="left:1920.5px;top:473.4px;width:1.2px;height:18.8px;background:#fff;"></div>
<div class="b" style="left:1777.2px;top:490.6px;width:54.2px;height:3.6px;background:#f0f0f0;"></div>
<div class="t" style="left:1576.8px;top:834.58px;font-size:20.8px;color:#9a9a9a;letter-spacing:-0.31px;font-weight:bold;font-style:italic;-webkit-text-stroke:0.28px;">CPU-Z</div>
<div class="t" style="left:1652px;top:841.9px;font-size:11.9px;color:#222;letter-spacing:0.04px;-webkit-text-stroke:0.28px;">Ver. 2.17.0.x64</div>
<div class="b bt" style="left:1744.4px;top:833px;width:58px;height:20.4px;"></div>
<div class="t" style="left:1773.4px;top:837.9px;font-size:11.9px;color:#111;letter-spacing:-0.4px;transform:translateX(-50%);-webkit-text-stroke:0.28px;">Tools</div>
<div class="b bt" style="left:1802.4px;top:833px;width:16.8px;height:20.4px;"></div>
<svg class="b" style="left:1807.2px;top:840.4px;" width="7.20" height="4.40" viewBox="0 0 8 5"><path d="M0 0 H8 L4 5 Z" fill="#111"/></svg>
<div class="b bt" style="left:1825.2px;top:833px;width:76.4px;height:20.4px;"></div>
<div class="t" style="left:1863.4px;top:837.9px;font-size:11.9px;color:#111;letter-spacing:-0.4px;transform:translateX(-50%);-webkit-text-stroke:0.28px;">Validate</div>
<div class="b bt" style="left:1905px;top:833px;width:76.2px;height:20.4px;"></div>
<div class="t" style="left:1943.1px;top:837.9px;font-size:11.9px;color:#111;letter-spacing:-0.4px;transform:translateX(-50%);-webkit-text-stroke:0.28px;">Close</div>
<div class="b gb" style="left:1576.2px;top:500.2px;width:399.2px;height:39px;"></div>
<div class="b" style="left:1581.4px;top:494.2px;width:126.16px;height:12px;background:#f0f0f0;"></div>
<div class="t" style="left:1583.4px;top:494.7px;font-size:11.9px;color:#161616;letter-spacing:-0.4px;-webkit-text-stroke:0.28px;">Display Device Selection</div>
<div class="b" style="left:1587.2px;top:513px;width:206.8px;height:18.8px;background:#f0f0f0;border:2px solid #8c8c8c;box-sizing:border-box;border-right-color:#e8e8e8;border-bottom-color:#e8e8e8;"></div>
<div class="t" style="left:1590.4px;top:517.1px;font-size:11.9px;color:#a4a4a4;letter-spacing:-0.4px;-webkit-text-stroke:0.28px;">NVIDIA GeForce GTX 1060 3GB</div>
<div class="b" style="left:1776px;top:515px;width:16.4px;height:14.8px;background:#ececec;border:2px solid #fafafa;border-right-color:#7a7a7a;border-bottom-color:#7a7a7a;box-sizing:border-box;"></div>
<svg class="b" style="left:1780.2px;top:520.6px;" width="7.20" height="4.40" viewBox="0 0 8 5"><path d="M0 0 H8 L4 5 Z" fill="#9a9a9a"/></svg>
<div class="t" style="left:1806.8px;top:517.1px;font-size:11.9px;color:#161616;letter-spacing:-0.4px;-webkit-text-stroke:0.28px;">Perf Level</div>
<div class="b" style="left:1865px;top:513px;width:101px;height:18.8px;background:#fff;border:2px solid #8c8c8c;box-sizing:border-box;border-right-color:#e8e8e8;border-bottom-color:#e8e8e8;"></div>
<div class="t" style="left:1868.2px;top:517.1px;font-size:11.9px;color:#28288c;letter-spacing:-0.4px;-webkit-text-stroke:0.28px;">Current</div>
<div class="b" style="left:1948px;top:515px;width:16.4px;height:14.8px;background:#ececec;border:2px solid #fafafa;border-right-color:#7a7a7a;border-bottom-color:#7a7a7a;box-sizing:border-box;"></div>
<svg class="b" style="left:1952.2px;top:520.6px;" width="7.20" height="4.40" viewBox="0 0 8 5"><path d="M0 0 H8 L4 5 Z" fill="#111"/></svg>
<div class="b gb" style="left:1576.2px;top:550.6px;width:399.2px;height:105.8px;"></div>
<div class="b" style="left:1581.4px;top:544.6px;width:29.38px;height:12px;background:#f0f0f0;"></div>
<div class="t" style="left:1583.4px;top:545.1px;font-size:11.9px;color:#161616;letter-spacing:-0.4px;-webkit-text-stroke:0.28px;">GPU</div>
<div class="t" style="left:1655px;top:559.9px;font-size:11.9px;color:#161616;letter-spacing:-0.4px;transform:translateX(-100%);-webkit-text-stroke:0.28px;">Name</div>
<div class="b vb" style="left:1662.8px;top:556.9px;width:215.2px;height:16.6px;"></div>
<div class="t" style="left:1770.4px;top:559.9px;font-size:11.9px;color:#28288c;letter-spacing:-0.4px;transform:translateX(-50%);-webkit-text-stroke:0.28px;">NVIDIA GeForce GTX 1060 3GB</div>
<div class="t" style="left:1655px;top:579.1px;font-size:11.9px;color:#161616;letter-spacing:-0.4px;transform:translateX(-100%);-webkit-text-stroke:0.28px;">Board Manuf.</div>
<div class="b vb" style="left:1662.8px;top:576.1px;width:215.2px;height:16.6px;"></div>
<div class="t" style="left:1770.4px;top:579.1px;font-size:11.9px;color:#28288c;letter-spacing:-0.4px;transform:translateX(-50%);-webkit-text-stroke:0.28px;">NVIDIA Corporation</div>
<div class="t" style="left:1655px;top:597.7px;font-size:11.9px;color:#161616;letter-spacing:-0.4px;transform:translateX(-100%);-webkit-text-stroke:0.28px;">Code Name</div>
<div class="b vb" style="left:1662.8px;top:594.7px;width:97.4px;height:16.6px;"></div>
<div class="t" style="left:1711.5px;top:597.7px;font-size:11.9px;color:#28288c;letter-spacing:-0.4px;transform:translateX(-50%);-webkit-text-stroke:0.28px;">GP106-300</div>
<div class="t" style="left:1810.2px;top:598.5px;font-size:11.9px;color:#161616;letter-spacing:-0.4px;transform:translateX(-100%);-webkit-text-stroke:0.28px;">Revision</div>
<div class="b vb" style="left:1818.8px;top:594.7px;width:59.2px;height:16.6px;"></div>
<div class="t" style="left:1848.4px;top:597.7px;font-size:11.9px;color:#28288c;letter-spacing:-0.4px;transform:translateX(-50%);-webkit-text-stroke:0.28px;">A1</div>
<div class="t" style="left:1655px;top:616.5px;font-size:11.9px;color:#161616;letter-spacing:-0.4px;transform:translateX(-100%);-webkit-text-stroke:0.28px;">Technology</div>
<div class="b vb" style="left:1662.8px;top:613.5px;width:97.4px;height:16.6px;"></div>
<div class="t" style="left:1711.5px;top:616.5px;font-size:11.9px;color:#28288c;letter-spacing:-0.4px;transform:translateX(-50%);-webkit-text-stroke:0.28px;">16 nm</div>
<div class="t" style="left:1810.2px;top:617.1px;font-size:11.9px;color:#161616;letter-spacing:-0.4px;transform:translateX(-100%);-webkit-text-stroke:0.28px;">TDP</div>
<div class="b vb" style="left:1818.8px;top:613.5px;width:59.2px;height:16.6px;"></div>
<div class="t" style="left:1848.4px;top:616.5px;font-size:11.9px;color:#28288c;letter-spacing:-0.4px;transform:translateX(-50%);-webkit-text-stroke:0.28px;">120.0 W</div>
<div class="t" style="left:1655px;top:635.7px;font-size:11.9px;color:#a4a4a4;letter-spacing:-0.4px;transform:translateX(-100%);-webkit-text-stroke:0.28px;">ROPs / TMUs</div>
<div class="b vb" style="left:1662.8px;top:632.7px;width:97.4px;height:16.6px;"></div>
<div class="t" style="left:1810.2px;top:636.1px;font-size:11.9px;color:#a4a4a4;letter-spacing:-0.4px;transform:translateX(-100%);-webkit-text-stroke:0.28px;">Cores</div>
<div class="b vb" style="left:1818.8px;top:632.7px;width:59.2px;height:16.6px;"></div>
<svg class="b" style="left:1887.6px;top:557px;" width="76.80" height="76.80" viewBox="0 0 80 80"><path d="M0 0 H80 V80 H7 L0 72 Z" fill="#0b0b0b"/><text x="7" y="14" font-size="7.5" font-weight="bold" fill="#e4e4e4" font-family="Liberation Sans, sans-serif" textLength="28" lengthAdjust="spacingAndGlyphs">NVIDIA</text><text x="7" y="27.5" font-size="14" font-weight="bold" fill="#fff" font-family="Liberation Sans, sans-serif" textLength="61" lengthAdjust="spacingAndGlyphs">GEFORCE</text><text x="7" y="40.5" font-size="14" font-weight="bold" fill="#fff" font-family="Liberation Sans, sans-serif" textLength="26" lengthAdjust="spacingAndGlyphs">GTX</text><path d="M38 72 L50 66 L56 52 Q59 45 67 44 L80 42" fill="none" stroke="#7cc010" stroke-width="6.5" stroke-linejoin="round"/><path d="M57 75 L64 60 Q66 55 72 54.5 L80 54" fill="none" stroke="#8ed020" stroke-width="5"/><path d="M70 76 L74 67 Q75 65 80 64.5" fill="none" stroke="#7cc010" stroke-width="4"/><path d="M0 72 L7 80 H80 V75.5 H9 L0 65.5 Z" fill="#a6dc48"/></svg>
<div class="b gb" style="left:1576.2px;top:668px;width:191.2px;height:72px;"></div>
<div class="b" style="left:1581.4px;top:662px;width:38.1px;height:12px;background:#f0f0f0;"></div>
<div class="t" style="left:1583.4px;top:662.5px;font-size:11.9px;color:#161616;letter-spacing:-0.4px;-webkit-text-stroke:0.28px;">Clocks</div>
<div class="b gb" style="left:1774.8px;top:668px;width:199.8px;height:93.2px;"></div>
<div class="b" style="left:1780px;top:662px;width:45.38px;height:12px;background:#f0f0f0;"></div>
<div class="t" style="left:1782px;top:662.5px;font-size:11.9px;color:#161616;letter-spacing:-0.4px;-webkit-text-stroke:0.28px;">Memory</div>
<div class="t" style="left:1654.2px;top:680.7px;font-size:11.9px;color:#161616;letter-spacing:-0.4px;transform:translateX(-100%);-webkit-text-stroke:0.28px;">GFX Core</div>
<div class="b vb" style="left:1663.4px;top:677.7px;width:96.8px;height:16.6px;"></div>
<div class="t" style="left:1711.8px;top:680.7px;font-size:11.9px;color:#28288c;letter-spacing:-0.4px;transform:translateX(-50%);-webkit-text-stroke:0.28px;">139.0 MHz</div>
<div class="t" style="left:1654.2px;top:698.7px;font-size:11.9px;color:#a4a4a4;letter-spacing:-0.4px;transform:translateX(-100%);-webkit-text-stroke:0.28px;">Shader / SoC</div>
<div class="b vb" style="left:1663.4px;top:695.7px;width:96.8px;height:16.6px;"></div>
<div class="t" style="left:1654.2px;top:717.9px;font-size:11.9px;color:#161616;letter-spacing:-0.4px;transform:translateX(-100%);-webkit-text-stroke:0.28px;">Memory</div>
<div class="b vb" style="left:1663.4px;top:714.9px;width:96.8px;height:16.6px;"></div>
<div class="t" style="left:1711.8px;top:717.9px;font-size:11.9px;color:#28288c;letter-spacing:-0.4px;transform:translateX(-50%);-webkit-text-stroke:0.28px;">405.0 MHz</div>
<div class="t" style="left:1839px;top:680.7px;font-size:11.9px;color:#161616;letter-spacing:-0.4px;transform:translateX(-100%);-webkit-text-stroke:0.28px;">Size</div>
<div class="b vb" style="left:1850.4px;top:677.7px;width:110px;height:16.6px;"></div>
<div class="t" style="left:1905.4px;top:680.7px;font-size:11.9px;color:#28288c;letter-spacing:-0.4px;transform:translateX(-50%);-webkit-text-stroke:0.28px;">3 GBytes</div>
<div class="t" style="left:1839px;top:699.5px;font-size:11.9px;color:#161616;letter-spacing:-0.4px;transform:translateX(-100%);-webkit-text-stroke:0.28px;">Type</div>
<div class="b vb" style="left:1850.4px;top:696.5px;width:110px;height:16.6px;"></div>
<div class="t" style="left:1905.4px;top:699.5px;font-size:11.9px;color:#28288c;letter-spacing:-0.4px;transform:translateX(-50%);-webkit-text-stroke:0.28px;">GDDR5</div>
<div class="t" style="left:1839px;top:717.9px;font-size:11.9px;color:#161616;letter-spacing:-0.4px;transform:translateX(-100%);-webkit-text-stroke:0.28px;">Vendor</div>
<div class="b vb" style="left:1850.4px;top:714.9px;width:110px;height:16.6px;"></div>
<div class="t" style="left:1905.4px;top:717.9px;font-size:11.9px;color:#28288c;letter-spacing:-0.4px;transform:translateX(-50%);-webkit-text-stroke:0.28px;">Samsung</div>
<div class="t" style="left:1839px;top:738.3px;font-size:11.9px;color:#161616;letter-spacing:-0.4px;transform:translateX(-100%);-webkit-text-stroke:0.28px;">Bus Width</div>
<div class="b vb" style="left:1850.4px;top:735.3px;width:110px;height:16.6px;"></div>
<div class="t" style="left:1905.4px;top:738.3px;font-size:11.9px;color:#28288c;letter-spacing:-0.4px;transform:translateX(-50%);-webkit-text-stroke:0.28px;">192 bits</div>
<div class="b" style="left:0px;top:1082.4px;width:2000px;height:42px;background:#1d2833;"></div>
<svg class="b" style="left:16px;top:1094.8px;" width="18.00" height="18.00" viewBox="0 0 88 88"><path d="M0 12.4 L35.7 7.6 V42.1 H0 Z M40 6.9 L87.3 0 V41.8 H40 Z M0 45.7 H35.7 V80.3 L0 75.3 Z M40 46.2 H87.3 V88 L40 81.3 Z" fill="#fff"/></svg>
<div class="b" style="left:50px;top:1084px;width:298.6px;height:40.4px;background:#f2f2f2;"></div>
<svg class="b" style="left:63.2px;top:1095.2px;" width="15.20" height="15.60" viewBox="0 0 12 12"><circle cx="7.3" cy="4.7" r="3.6" fill="none" stroke="#333" stroke-width="1.2"/><path d="M4.8 7.2 L1 11" stroke="#333" stroke-width="1.4"/></svg>
<div class="t" style="left:91.5px;top:1095.74px;font-size:15.2px;color:#3a3a3a;letter-spacing:-0.02px;-webkit-text-stroke:0.16px;">Търсене</div>
<svg class="b" style="left:364.4px;top:1092.8px;" width="22.00" height="18.80" viewBox="0 0 22 19"><rect x="3.6" y="2" width="10.4" height="15" fill="none" stroke="#f2f2f2" stroke-width="1.8"/><path d="M0.8 5 H16.4 M0.8 14 H16.4" stroke="#f2f2f2" stroke-width="1.6"/><path d="M1.2 2 V17" stroke="#f2f2f2" stroke-width="1.2"/><path d="M19 3 V8 M19 11 V16" stroke="#f2f2f2" stroke-width="1.6"/><rect x="17.6" y="8.4" width="3.4" height="2.4" fill="#f2f2f2"/></svg>
<svg class="b" style="left:414.8px;top:1090.4px;" width="27.20" height="27.20" viewBox="0 0 26 26"><defs><linearGradient id="eg" x1="0" y1="0" x2="0.6" y2="1"><stop offset="0" stop-color="#2aa8e8"/><stop offset="1" stop-color="#0c55a8"/></linearGradient><linearGradient id="eg2" x1="0" y1="0" x2="1" y2="0.4"><stop offset="0" stop-color="#2ab8d8"/><stop offset="0.6" stop-color="#4ad08a"/><stop offset="1" stop-color="#7ad848"/></linearGradient></defs><circle cx="13" cy="13" r="12" fill="url(#eg)"/><path d="M1.6 11 C3 4.6 8.6 1 13.6 1 C20.6 1 25 6.4 25 12 C25 16.4 21.8 18.6 18.6 18.6 C16 18.6 14.8 17.4 15.4 16.2 C16.4 14.2 15.6 10.4 12 10 C7.6 9.6 3.6 12 2.4 16.6 C1.4 14.8 1.2 12.8 1.6 11 Z" fill="url(#eg2)"/><path d="M12 10 C15.6 10.4 16.4 14.2 15.4 16.2 C14.8 17.4 16 18.6 18.6 18.6 C20.6 18.6 22.6 17.8 23.8 16 C22 21 17.6 24.6 13 24.6 C8 24.6 6 20.4 6.6 16.6 C7.2 12.8 9.6 10 12 10 Z" fill="#0a3f88" opacity="0.75"/></svg>
<div class="b" style="left:454px;top:1082.4px;width:50.4px;height:42px;background:#474e5a;"></div>
<div class="b" style="left:454px;top:1121.2px;width:50.4px;height:3.2px;background:#86b8e8;"></div>
<svg class="b" style="left:466.8px;top:1092.4px;" width="25.20" height="21.20" viewBox="0 0 25 21"><path d="M1 3 H9 L11 5.4 H24 V20 H1 Z" fill="#e8b830"/><path d="M1 8 H24 V20 H1 Z" fill="#f8d868"/><rect x="7" y="13" width="11" height="7" fill="#3a8ad8"/><rect x="9" y="15" width="7" height="5" fill="#f8d868"/></svg>
<svg class="b" style="left:516.8px;top:1091.2px;" width="24.80" height="25.20" viewBox="0 0 25 25"><path d="M2 7 H23 V23 H2 Z" fill="#f4f4f4"/><path d="M8 7 V4.6 A4.5 3.6 0 0 1 17 4.6 V7" fill="none" stroke="#38b8c8" stroke-width="1.8"/><rect x="7.4" y="10.6" width="4.4" height="4.4" fill="#f25022"/><rect x="13" y="10.6" width="4.4" height="4.4" fill="#7fba00"/><rect x="7.4" y="16.2" width="4.4" height="4.4" fill="#00a4ef"/><rect x="13" y="16.2" width="4.4" height="4.4" fill="#ffb900"/></svg>
<svg class="b" style="left:566.8px;top:1093.6px;" width="26.40" height="20.00" viewBox="0 0 26 20"><path d="M1 7 L13 0.6 L25 7 V19 H1 Z" fill="#f4f4f4"/><path d="M4 9 H22 L13 15.4 Z" fill="#1d2833"/><path d="M1 7.6 L13 16.6 L25 7.6 V19 H1 Z" fill="#fafafa"/></svg>
<svg class="b" style="left:619.6px;top:1090.4px;" width="26.00" height="26.00" viewBox="0 0 26 26"><circle cx="13" cy="13" r="12" fill="#e8e8e8"/><path d="M13 13 L2.6 7 A12 12 0 0 1 23.4 7 Z" fill="#e34133"/><path d="M13 13 L23.4 7 A12 12 0 0 1 13 25 Z" fill="#f8c51c"/><path d="M13 13 L13 25 A12 12 0 0 1 2.6 7 Z" fill="#31a354"/><circle cx="13" cy="13" r="5.6" fill="#fff"/><circle cx="13" cy="13" r="4.4" fill="#4688f0"/></svg>
<svg class="b" style="left:672.4px;top:1091.2px;" width="24.80" height="24.80" viewBox="0 0 16 16"><rect x="0.6" y="0.6" width="14.8" height="14.8" rx="3.4" fill="#7a3ad8"/><rect x="3.6" y="3.6" width="8.8" height="8.8" rx="1.6" fill="none" stroke="#f0e8ff" stroke-width="1.6"/><rect x="6" y="6" width="4" height="4" fill="#f0e8ff"/><path d="M8 1.2 V3 M8 13 V14.8 M1.2 8 H3 M13 8 H14.8" stroke="#f0e8ff" stroke-width="1.5"/></svg>
<div class="b" style="left:665.2px;top:1121.6px;width:38px;height:2.8px;background:#8ab4e0;"></div>
<svg class="b" style="left:720px;top:1091.2px;" width="25.20" height="25.20" viewBox="0 0 25 25"><circle cx="12.5" cy="12.5" r="12" fill="#16305a"/><circle cx="17" cy="9" r="4" fill="none" stroke="#f0f4f8" stroke-width="2"/><path d="M1 13 L9 16.6 L14 11" fill="none" stroke="#f0f4f8" stroke-width="3.4" stroke-linecap="round"/><circle cx="8.4" cy="17.6" r="3.2" fill="#f0f4f8"/></svg>
<div class="b" style="left:715.2px;top:1121.6px;width:39.2px;height:2.8px;background:#8ab4e0;"></div>
<svg class="b" style="left:770.8px;top:1092.8px;" width="26.40" height="21.20" viewBox="0 0 26 21"><rect x="0.6" y="0.6" width="24.8" height="17" fill="#38a0e0" stroke="#8ad0f8" stroke-width="1.2"/><rect x="3" y="4" width="8" height="8" fill="#c8e8fc"/><path d="M13 5 H22 M13 8.4 H22 M13 11.8 H20" stroke="#e8f4fc" stroke-width="1.5"/><rect x="8" y="18.4" width="10" height="2" fill="#b0c4d4"/></svg>
<div class="b" style="left:765.2px;top:1121.6px;width:39.2px;height:2.8px;background:#8ab4e0;"></div>
<svg class="b" style="left:1737.2px;top:1098.8px;" width="14.80" height="8.80" viewBox="0 0 12 7"><path d="M1 6 L6 1 L11 6" fill="none" stroke="#f0f0f0" stroke-width="1.5"/></svg>
<svg class="b" style="left:1763.2px;top:1093.6px;" width="14.80" height="19.20" viewBox="0 0 12 16"><rect x="2.6" y="4" width="6" height="8.6" rx="1.4" fill="none" stroke="#f0f0f0" stroke-width="1.3"/><path d="M5.6 0.8 V4 M3 15 H8.4 M5.6 12.6 V15" stroke="#f0f0f0" stroke-width="1.3"/><circle cx="9" cy="7.6" r="1.8" fill="#f0f0f0"/></svg>
<svg class="b" style="left:1786.4px;top:1094.8px;" width="18.80" height="17.20" viewBox="0 0 16 15"><rect x="4.6" y="1" width="10.6" height="8.6" fill="none" stroke="#f0f0f0" stroke-width="1.4"/><rect x="0.8" y="4.4" width="3.2" height="7.6" fill="#f0f0f0"/><path d="M7 13.6 H13 M10 9.6 V13.6" stroke="#f0f0f0" stroke-width="1.4"/></svg>
<svg class="b" style="left:1811.2px;top:1094.8px;" width="18.00" height="17.20" viewBox="0 0 16 15"><path d="M1 5.4 H3.6 L7 2 V13 L3.6 9.6 H1 Z" fill="none" stroke="#f0f0f0" stroke-width="1.3"/><path d="M9.4 5 Q10.8 7.5 9.4 10 M11.6 3.4 Q13.8 7.5 11.6 11.6 M13.8 1.8 Q16.6 7.5 13.8 13.2" fill="none" stroke="#f0f0f0" stroke-width="1.1"/></svg>
<div class="t" style="left:1839.6px;top:1097.34px;font-size:11.8px;color:#f4f4f4;letter-spacing:-0.856px;">ENG</div>
<div class="t" style="left:1908px;top:1087.34px;font-size:11.8px;color:#f4f4f4;letter-spacing:-0.426px;transform:translateX(-50%);">12:16</div>
<div class="t" style="left:1908px;top:1105.14px;font-size:11.8px;color:#f4f4f4;letter-spacing:-0.024px;transform:translateX(-50%);">11.11.2025 г.</div>
<svg class="b" style="left:1955.6px;top:1094.4px;" width="18.40" height="17.60" viewBox="0 0 18 17"><path d="M1 1 H17 V12.4 H8 L4.6 16 V12.4 H1 Z" fill="#f4f4f4"/><path d="M4 4.4 H14 M4 7 H14 M4 9.6 H10" stroke="#1d2833" stroke-width="1"/><circle cx="14.6" cy="13.6" r="3" fill="#c8c8c8" stroke="#1d2833" stroke-width="0.8"/></svg>
</div></div></body></html>
